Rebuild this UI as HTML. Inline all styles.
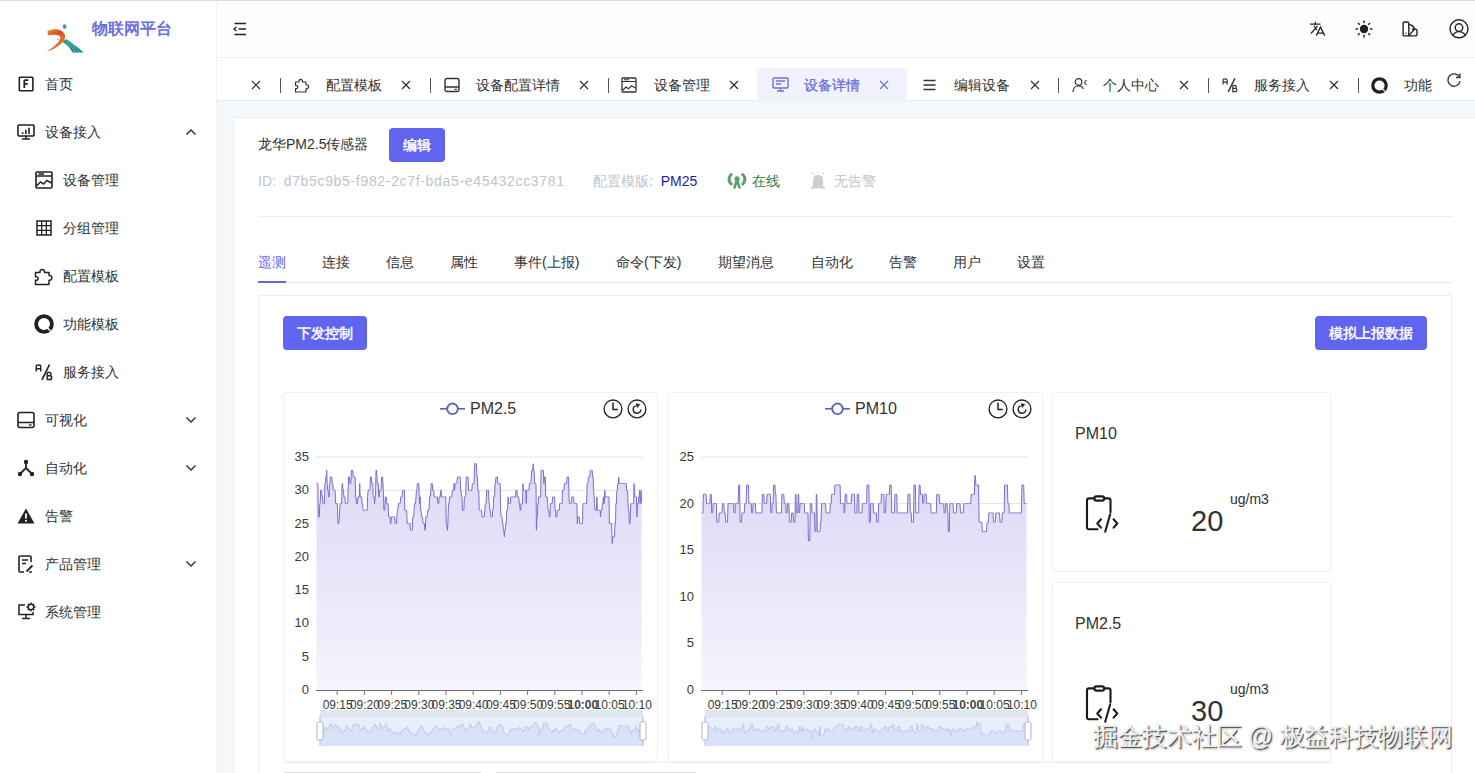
<!DOCTYPE html>
<html><head><meta charset="utf-8">
<style>
*{box-sizing:border-box;margin:0;padding:0}
html,body{width:1475px;height:773px;overflow:hidden}
body{position:relative;background:#f5f8fb;font-family:"Liberation Sans",sans-serif;color:#303133;font-size:14px}
.a{position:absolute;white-space:nowrap}
svg{position:absolute;overflow:visible}
.side{left:0;top:0;width:217px;height:773px;background:#fff;border-right:1px solid #f2f2f2}
.mi{left:45px;font-size:14px;color:#303133;line-height:20px}
.si{left:63px;font-size:14px;color:#303133;line-height:20px}
.hdr{left:217px;top:0;width:1258px;height:58px;background:#fdfdfd;border-bottom:1px solid #efefef}
.tabs{left:217px;top:58px;width:1258px;height:43px;background:#fff;border-bottom:1px solid #e9edf2}
.tt{font-size:14px;color:#303133;line-height:20px;top:75px}
.dv{width:1px;height:15px;background:#555;top:78px}
.card{left:233px;top:117px;width:1260px;height:700px;background:#fff;border:1px solid #eef0f3}
.btn{background:#6065f0;color:#fff;font-weight:normal;-webkit-text-stroke:0.45px #fff;font-size:14px;border-radius:4px;text-align:center}
.dt{font-size:14px;line-height:20px;top:252px;color:#303133}
.panel{left:258px;top:295px;width:1194px;height:500px;border:1px solid #ebeef5;border-radius:2px}
.cc{border:1px solid #eef0f3;border-radius:3px;background:#fff}
.yl{font-size:13px;color:#3a3a3a;text-align:right;width:30px;line-height:14px}
.xl{font-size:12px;color:#3a3a3a;line-height:14px}
</style></head><body>
<div class="a" style="left:0;top:0;width:1475px;height:1.4px;background:#dcdcdc;z-index:5"></div>

<!-- SIDEBAR -->
<div class="a side">
  <svg style="left:44px;top:22px" width="42" height="34" viewBox="0 0 42 34">
    <defs><linearGradient id="lg" x1="0" y1="0" x2="0.6" y2="1"><stop offset="0" stop-color="#e0a535"/><stop offset="0.4" stop-color="#e0482a"/><stop offset="1" stop-color="#e09030"/></linearGradient></defs>
    <ellipse cx="20.6" cy="4.6" rx="1.8" ry="2.3" fill="#3a9ac0"/>
    <path d="M3.5,8.8 C9,6.5 18,6.2 20.8,12.5 C23,18.5 15,25.5 2.7,29.8 C10,24.5 16,20 16.3,15.5 C16.5,12.3 11,12 3.8,13.5 Z" fill="url(#lg)"/>
    <path d="M12.5,16.5 L15,17 L13.8,18.6Z" fill="#4aa8d8"/>
    <path d="M19.3,18.8 L22.5,17.3 C28,21 34,25.5 39.8,30.6 L28.5,30.6 C26,26 23,22.5 19.3,20.8 Z" fill="#1e8e8a"/>
    <path d="M21.5,18.3 C27,22 32,26 36,30.6 M20.5,19.8 C25.5,23 29.5,26.5 32,30.6" stroke="#6cc8bc" stroke-width="0.7" fill="none"/>
  </svg>
  <div class="a" style="left:92px;top:19px;font-size:16px;font-weight:bold;color:#6b6fe0;line-height:20px">物联网平台</div>

  <!-- 首页 -->
  <svg style="left:18px;top:76px" width="16" height="16" viewBox="0 0 16 16"><rect x="1.3" y="1.2" width="13.6" height="13.6" rx="0.9" fill="none" stroke="#222" stroke-width="1.6"/><path d="M6.3,4.2 V12 M6.3,4.2 H10.3 M6.3,7.8 H9.8" stroke="#222" stroke-width="1.8" fill="none"/></svg>
  <div class="a mi" style="top:74px">首页</div>
  <!-- 设备接入 -->
  <svg style="left:17px;top:124px" width="18" height="16" viewBox="0 0 18 16"><rect x="1" y="1" width="16" height="11" rx="1" fill="none" stroke="#222" stroke-width="1.6"/><path d="M9,12 V14.6 M5,15 H13 M5.6,10 V8.3 M8.8,10 V5.8 M12,10 V3.8" stroke="#222" stroke-width="1.6" fill="none"/></svg>
  <div class="a mi" style="top:122px">设备接入</div>
  <svg style="left:185px;top:128px" width="12" height="8" viewBox="0 0 12 8"><path d="M1.5,6.5 L6,2 L10.5,6.5" stroke="#333" stroke-width="1.5" fill="none"/></svg>
  <!-- 设备管理 -->
  <svg style="left:35px;top:171px" width="18" height="18" viewBox="0 0 18 18"><rect x="1" y="1" width="16" height="16" rx="1" fill="none" stroke="#222" stroke-width="1.6"/><path d="M1,5 H17 M3.5,3 H9" stroke="#222" stroke-width="1.3" fill="none"/><path d="M1.5,15 L5.5,11 L8.5,13 L12,9.5 L16.5,12" stroke="#222" stroke-width="1.5" fill="none"/></svg>
  <div class="a si" style="top:170px">设备管理</div>
  <!-- 分组管理 -->
  <svg style="left:36px;top:220px" width="16" height="16" viewBox="0 0 16 16"><rect x="1" y="1" width="14" height="14" fill="none" stroke="#222" stroke-width="1.5"/><path d="M1,5.7 H15 M1,10.3 H15 M5.7,1 V15 M10.3,1 V15" stroke="#222" stroke-width="1.3" fill="none"/></svg>
  <div class="a si" style="top:218px">分组管理</div>
  <!-- 配置模板 -->
  <svg style="left:34px;top:267px" width="19" height="19" viewBox="0 0 19 19"><path d="M1.5,5.5 H6 C5,1.5 11.5,1.5 10.5,5.5 H15 V8.5 C18.8,7.8 18.8,14 15,13.3 V17.5 H1.5 V13.2 C5,13.8 5,9 1.5,9.8 Z" fill="none" stroke="#222" stroke-width="1.5" stroke-linejoin="round"/></svg>
  <div class="a si" style="top:266px">配置模板</div>
  <!-- 功能模板 -->
  <svg style="left:34px;top:314px" width="20" height="20" viewBox="0 0 20 20"><circle cx="10" cy="10" r="7.9" fill="none" stroke="#222" stroke-width="3.8"/><path d="M13,13.5 L16.5,17" stroke="#fff" stroke-width="1.4"/></svg>
  <div class="a si" style="top:314px">功能模板</div>
  <!-- 服务接入 -->
  <svg style="left:35px;top:363px" width="18" height="18" viewBox="0 0 18 18"><path d="M1.2,8.5 V3.5 C1.2,1.5 5.8,1.5 5.8,3.5 V8.5 M1.2,5.8 H5.8" fill="none" stroke="#222" stroke-width="1.4"/><path d="M14.5,1.5 L7,16.8" stroke="#222" stroke-width="1.7"/><path d="M12.2,9.5 V16.5 H15 C17.3,16.5 17.3,12.8 15,12.8 H12.2 M12.2,9.5 H14.6 C16.6,9.5 16.6,12.8 14.6,12.8" fill="none" stroke="#222" stroke-width="1.4"/></svg>
  <div class="a si" style="top:362px">服务接入</div>
  <!-- 可视化 -->
  <svg style="left:17px;top:411px" width="18" height="18" viewBox="0 0 18 18"><rect x="1" y="1.5" width="16" height="15" rx="2" fill="none" stroke="#222" stroke-width="1.6"/><path d="M1,11.5 H17" stroke="#222" stroke-width="1.5"/><path d="M12,14 H14.5" stroke="#222" stroke-width="1.4"/></svg>
  <div class="a mi" style="top:410px">可视化</div>
  <svg style="left:185px;top:416px" width="12" height="8" viewBox="0 0 12 8"><path d="M1.5,1.5 L6,6 L10.5,1.5" stroke="#333" stroke-width="1.5" fill="none"/></svg>
  <!-- 自动化 -->
  <svg style="left:17px;top:459px" width="18" height="18" viewBox="0 0 18 18"><path d="M9,3 V9 L3,15 M9,9 L15,15" stroke="#222" stroke-width="1.8" fill="none"/><circle cx="9" cy="3" r="2.2" fill="#222"/><circle cx="3" cy="15" r="2.2" fill="#222"/><circle cx="15" cy="15" r="2.2" fill="#222"/></svg>
  <div class="a mi" style="top:458px">自动化</div>
  <svg style="left:185px;top:464px" width="12" height="8" viewBox="0 0 12 8"><path d="M1.5,1.5 L6,6 L10.5,1.5" stroke="#333" stroke-width="1.5" fill="none"/></svg>
  <!-- 告警 -->
  <svg style="left:17px;top:507px" width="18" height="18" viewBox="0 0 18 18"><path d="M9,1.5 L17.5,16.5 H0.5 Z" fill="#222"/><path d="M9,6.5 V11.5" stroke="#fff" stroke-width="1.8"/><circle cx="9" cy="13.8" r="1" fill="#fff"/></svg>
  <div class="a mi" style="top:506px">告警</div>
  <!-- 产品管理 -->
  <svg style="left:17px;top:555px" width="18" height="18" viewBox="0 0 18 18"><path d="M14,7 V2 C14,1.5 13.5,1 13,1 H3 C2.5,1 2,1.5 2,2 V16 C2,16.5 2.5,17 3,17 H7" fill="none" stroke="#222" stroke-width="1.6"/><path d="M5,5 H11 M5,8.5 H9" stroke="#222" stroke-width="1.5"/><path d="M9.5,16.5 L15.5,10.5" stroke="#222" stroke-width="1.8"/><path d="M12,17 H15" stroke="#222" stroke-width="1.4"/></svg>
  <div class="a mi" style="top:554px">产品管理</div>
  <svg style="left:185px;top:560px" width="12" height="8" viewBox="0 0 12 8"><path d="M1.5,1.5 L6,6 L10.5,1.5" stroke="#333" stroke-width="1.5" fill="none"/></svg>
  <!-- 系统管理 -->
  <svg style="left:17px;top:602px" width="20" height="18" viewBox="0 0 20 18"><path d="M8,3 H2 V12.5 H16 V10" fill="none" stroke="#222" stroke-width="1.5"/><path d="M9,12.5 V16 M5,16.5 H13" stroke="#222" stroke-width="1.5"/><circle cx="14" cy="5" r="2.8" fill="none" stroke="#222" stroke-width="1.5"/><path d="M14,0.5 V2 M14,8 V9.5 M9.5,5 H11 M17,5 H18.5 M10.8,1.8 L11.9,2.9 M16.1,7.1 L17.2,8.2 M10.8,8.2 L11.9,7.1 M16.1,2.9 L17.2,1.8" stroke="#222" stroke-width="1.3"/></svg>
  <div class="a mi" style="top:602px">系统管理</div>
</div>

<!-- HEADER -->
<div class="a hdr"></div>
<svg style="left:233px;top:22px" width="14" height="14" viewBox="0 0 14 14"><path d="M1.5,1.5 H13 M5.5,7 H13 M1.5,12.5 H13" stroke="#222" stroke-width="1.5"/><path d="M3.5,5 L1,7 L3.5,9" stroke="#222" stroke-width="1.4" fill="none"/></svg>
<!-- translate -->
<svg style="left:1310px;top:21px" width="17" height="16" viewBox="0 0 17 16"><path d="M0,3.1 H10.5 M5.4,0.8 V3 M4,5 L6.8,9.2 M7.6,4.8 L1,12.5" stroke="#222" stroke-width="1.2" fill="none"/><path d="M6.3,14.6 L10.5,6 L14.7,14.6 M7.9,12.2 H13" stroke="#222" stroke-width="1.3" fill="none"/></svg>
<!-- sun -->
<svg style="left:1355px;top:20px" width="18" height="18" viewBox="0 0 18 18"><circle cx="9" cy="9" r="4.2" fill="#222"/><path d="M9,0.5 V3 M9,15 V17.5 M0.5,9 H3 M15,9 H17.5 M3,3 L4.7,4.7 M13.3,13.3 L15,15 M3,15 L4.7,13.3 M13.3,4.7 L15,3" stroke="#222" stroke-width="1.5"/></svg>
<!-- palette -->
<svg style="left:1401px;top:20px" width="18" height="18" viewBox="0 0 18 18"><g fill="none" stroke="#222" stroke-width="1.4" stroke-linejoin="round"><path d="M2.1,3.5 C2.1,2.6 2.7,2 3.6,2 H6.3 C7.2,2 7.8,2.6 7.8,3.5 V15.9 H3.6 C2.7,15.9 2.1,15.3 2.1,14.4 Z"/><path d="M7.8,4.6 C10.5,4.6 13.2,6.5 13.5,9.2 L7.8,15.6"/><path d="M11,9.2 H14.5 C15.4,9.2 16,9.8 16,10.7 V14.4 C16,15.3 15.4,15.9 14.5,15.9 H7.8"/></g><circle cx="4.9" cy="13.2" r="0.7" fill="#222"/></svg>
<!-- user -->
<svg style="left:1449px;top:19px" width="20" height="20" viewBox="0 0 20 20"><g fill="none" stroke="#222" stroke-width="1.4"><circle cx="10" cy="9.8" r="9"/><circle cx="10" cy="8.6" r="3.8"/><path d="M3.6,16.3 C5.3,13.8 7.8,12.6 10,12.6 C12.2,12.6 14.7,13.8 16.4,16.3"/></g></svg>

<!-- TABS BAR -->
<div class="a tabs"></div>
<svg style="left:251px;top:80px" width="10" height="10" viewBox="0 0 10 10"><path d="M1,1 L9,9 M9,1 L1,9" stroke="#333" stroke-width="1.2"/></svg>
<div class="a dv" style="left:280px"></div>
<svg style="left:294px;top:77px" width="16" height="16" viewBox="0 0 16 16"><path d="M1.5,5 H5 C4.2,1.5 9.2,1.5 8.5,5 H12 V7.8 C15.5,7.2 15.5,12.3 12,11.8 V15 H1.5 V11.5 C4.5,12 4.5,8 1.5,8.5 Z" fill="none" stroke="#333" stroke-width="1.2" stroke-linejoin="round"/></svg>
<div class="a tt" style="left:326px">配置模板</div>
<svg style="left:401px;top:80px" width="10" height="10" viewBox="0 0 10 10"><path d="M1,1 L9,9 M9,1 L1,9" stroke="#333" stroke-width="1.2"/></svg>
<div class="a dv" style="left:430px"></div>
<svg style="left:444px;top:77px" width="16" height="16" viewBox="0 0 16 16"><rect x="1" y="1.5" width="14" height="13" rx="2" fill="none" stroke="#333" stroke-width="1.4"/><path d="M1,10 H15 M10.5,12.3 H12.8" stroke="#333" stroke-width="1.3"/></svg>
<div class="a tt" style="left:476px">设备配置详情</div>
<svg style="left:579px;top:80px" width="10" height="10" viewBox="0 0 10 10"><path d="M1,1 L9,9 M9,1 L1,9" stroke="#333" stroke-width="1.2"/></svg>
<div class="a dv" style="left:608px"></div>
<svg style="left:621px;top:77px" width="16" height="16" viewBox="0 0 16 16"><rect x="1" y="1" width="14" height="14" rx="1" fill="none" stroke="#333" stroke-width="1.3"/><path d="M1,4.5 H15 M3,2.8 H8" stroke="#333" stroke-width="1.1" fill="none"/><path d="M1.5,13.5 L5,10 L7.5,11.8 L10.5,8.8 L14.5,11" stroke="#333" stroke-width="1.2" fill="none"/></svg>
<div class="a tt" style="left:654px">设备管理</div>
<svg style="left:729px;top:80px" width="10" height="10" viewBox="0 0 10 10"><path d="M1,1 L9,9 M9,1 L1,9" stroke="#333" stroke-width="1.2"/></svg>
<div class="a" style="left:757px;top:68px;width:150px;height:33px;background:#f0f1fc;border-radius:6px 6px 0 0"></div>
<svg style="left:772px;top:77px" width="17" height="15" viewBox="0 0 17 15"><rect x="1" y="1" width="15" height="10" rx="1" fill="none" stroke="#6d70d6" stroke-width="1.4"/><path d="M8.5,11 V13.5 M5,14 H12 M4,4 H13 M4,7 H9" stroke="#6d70d6" stroke-width="1.3"/></svg>
<div class="a tt" style="left:804px;color:#6d70d6;-webkit-text-stroke:0.3px #6d70d6">设备详情</div>
<svg style="left:879px;top:80px" width="10" height="10" viewBox="0 0 10 10"><path d="M1,1 L9,9 M9,1 L1,9" stroke="#6d70d6" stroke-width="1.2"/></svg>
<svg style="left:923px;top:79px" width="13" height="12" viewBox="0 0 13 12"><path d="M0.5,1.5 H12.5 M0.5,6 H12.5 M0.5,10.5 H12.5" stroke="#333" stroke-width="1.4"/></svg>
<div class="a tt" style="left:954px">编辑设备</div>
<svg style="left:1030px;top:80px" width="10" height="10" viewBox="0 0 10 10"><path d="M1,1 L9,9 M9,1 L1,9" stroke="#333" stroke-width="1.2"/></svg>
<div class="a dv" style="left:1058px"></div>
<svg style="left:1072px;top:77px" width="16" height="16" viewBox="0 0 16 16"><circle cx="6.5" cy="5" r="3.3" fill="none" stroke="#333" stroke-width="1.2"/><path d="M1,15 C1,10.5 3.5,9 6.5,9 C9.5,9 11,10.5 11.5,12" fill="none" stroke="#333" stroke-width="1.2"/><path d="M14.5,3 L12.5,5.5 L14.5,8" fill="none" stroke="#333" stroke-width="1.1"/></svg>
<div class="a tt" style="left:1103px">个人中心</div>
<svg style="left:1179px;top:80px" width="10" height="10" viewBox="0 0 10 10"><path d="M1,1 L9,9 M9,1 L1,9" stroke="#333" stroke-width="1.2"/></svg>
<div class="a dv" style="left:1208px"></div>
<svg style="left:1222px;top:77px" width="16" height="16" viewBox="0 0 18 18"><path d="M1.2,8.5 V3.5 C1.2,1.5 5.8,1.5 5.8,3.5 V8.5 M1.2,5.8 H5.8" fill="none" stroke="#333" stroke-width="1.4"/><path d="M14.5,1.5 L7,16.8" stroke="#333" stroke-width="1.6"/><path d="M12.2,9.5 V16.5 H15 C17.3,16.5 17.3,12.8 15,12.8 H12.2 M12.2,9.5 H14.6 C16.6,9.5 16.6,12.8 14.6,12.8" fill="none" stroke="#333" stroke-width="1.4"/></svg>
<div class="a tt" style="left:1254px">服务接入</div>
<svg style="left:1329px;top:80px" width="10" height="10" viewBox="0 0 10 10"><path d="M1,1 L9,9 M9,1 L1,9" stroke="#333" stroke-width="1.2"/></svg>
<div class="a dv" style="left:1358px"></div>
<svg style="left:1371px;top:77px" width="17" height="17" viewBox="0 0 20 20"><circle cx="10" cy="10" r="7.9" fill="none" stroke="#222" stroke-width="3.8"/><path d="M13,13.5 L16.5,17" stroke="#fff" stroke-width="1.4"/></svg>
<div class="a tt" style="left:1404px">功能</div>
<svg style="left:1446px;top:72px" width="16" height="16" viewBox="0 0 16 16"><path d="M13.5,5 A6.2,6.2 0 1,0 14.2,9" fill="none" stroke="#333" stroke-width="1.3"/><path d="M14,1.5 V5.5 H10" fill="none" stroke="#333" stroke-width="1.3"/></svg>

<!-- CONTENT CARD -->
<div class="a card"></div>
<div class="a" style="left:258px;top:134px;font-size:14px;line-height:20px;color:#303133">龙华PM2.5传感器</div>
<div class="a btn" style="left:389px;top:128px;width:56px;height:34px;line-height:34px">编辑</div>
<div class="a" style="left:258px;top:171px;font-size:14px;line-height:20px;color:#c0c4cc">ID:&nbsp; <span style="letter-spacing:0.67px">d7b5c9b5-f982-2c7f-bda5-e45432cc3781</span></div>
<div class="a" style="left:593px;top:171px;font-size:14px;line-height:20px;color:#c0c4cc">配置模版:&nbsp; <span style="color:#1c1ca8">PM25</span></div>
<svg style="left:727px;top:172px" width="20" height="17" viewBox="0 0 20 17"><g fill="#5a9e6b"><path d="M4.2,0.8 C-0.6,4.2 -0.6,10.5 4.2,13.8 L6.2,12 C2.8,9.5 2.8,5 6.2,2.6 Z"/><path d="M15.8,0.8 C20.6,4.2 20.6,10.5 15.8,13.8 L13.8,12 C17.2,9.5 17.2,5 13.8,2.6 Z"/><circle cx="10" cy="6.8" r="2.6"/><path d="M8.3,8.5 L6,16.5 H8.6 L10,12 L11.4,16.5 H14 L11.7,8.5 Z"/></g></svg>
<div class="a" style="left:752px;top:171px;font-size:14px;line-height:20px;color:#2e8043">在线</div>
<svg style="left:810px;top:171px" width="16" height="18" viewBox="0 0 16 18"><path d="M3,16 V9 C3,5 5,4 8,4 C11,4 13,5 13,9 V16 Z" fill="#cfcfcf"/><rect x="1" y="15.5" width="14" height="2" fill="#cfcfcf"/><path d="M8,0.5 V2.5 M2,2 L3.5,3.5 M14,2 L12.5,3.5" stroke="#cfcfcf" stroke-width="1.2"/></svg>
<div class="a" style="left:834px;top:171px;font-size:14px;line-height:20px;color:#c0c4cc">无告警</div>
<div class="a" style="left:258px;top:216px;width:1194px;height:1px;background:#ebeef5"></div>

<!-- detail tabs -->
<div class="a dt" style="left:258px;color:#6366f1">遥测</div>
<div class="a dt" style="left:322px">连接</div>
<div class="a dt" style="left:386px">信息</div>
<div class="a dt" style="left:450px">属性</div>
<div class="a dt" style="left:514px">事件(上报)</div>
<div class="a dt" style="left:616px">命令(下发)</div>
<div class="a dt" style="left:718px">期望消息</div>
<div class="a dt" style="left:811px">自动化</div>
<div class="a dt" style="left:889px">告警</div>
<div class="a dt" style="left:953px">用户</div>
<div class="a dt" style="left:1017px">设置</div>
<div class="a" style="left:258px;top:282px;width:1194px;height:1px;background:#e4e7ed"></div>
<div class="a" style="left:258px;top:281px;width:28px;height:2px;background:#6366f1"></div>

<!-- panel -->
<div class="a panel"></div>
<div class="a btn" style="left:283px;top:316px;width:84px;height:34px;line-height:34px">下发控制</div>
<div class="a btn" style="left:1315px;top:316px;width:112px;height:34px;line-height:34px">模拟上报数据</div>

<!-- chart cards -->
<div class="a cc" style="left:283px;top:392px;width:375px;height:370px"></div>
<div class="a cc" style="left:668px;top:392px;width:375px;height:370px"></div>
<div class="a cc" style="left:1052px;top:392px;width:279px;height:180px"></div>
<div class="a cc" style="left:1052px;top:582px;width:279px;height:180px"></div>
<div class="a" style="left:283px;top:762px;width:1050px;height:1px;background:#f0f0f0"></div><div class="a" style="left:284px;top:771.5px;width:197px;height:1.5px;background:#dcdcdc"></div>
<div class="a" style="left:496px;top:771.5px;width:200px;height:1.5px;background:#dcdcdc"></div>

<svg style="left:0;top:0" width="1475" height="773" viewBox="0 0 1475 773">
<defs><linearGradient id="g1" x1="0" y1="0" x2="0" y2="1"><stop offset="0" stop-color="#ddd8f6"/><stop offset="1" stop-color="#f6f4fd"/></linearGradient></defs>
<path d="M316,457.0 H643" stroke="#e3e5ea" stroke-width="1"/>
<path d="M316,490.3 H643" stroke="#e3e5ea" stroke-width="1"/>
<path d="M316,523.6 H643" stroke="#e3e5ea" stroke-width="1"/>
<path d="M316,556.9 H643" stroke="#e3e5ea" stroke-width="1"/>
<path d="M316,590.1 H643" stroke="#e3e5ea" stroke-width="1"/>
<path d="M316,623.4 H643" stroke="#e3e5ea" stroke-width="1"/>
<path d="M316,656.7 H643" stroke="#e3e5ea" stroke-width="1"/>
<path d="M316.5,483.6 L317.0,483.6 L317.4,483.6 L317.9,483.6 L318.4,516.9 L318.8,516.9 L319.3,516.9 L319.8,503.6 L320.2,503.6 L320.7,490.3 L321.1,490.3 L321.6,490.3 L322.1,496.9 L322.5,496.9 L323.0,503.6 L323.5,503.6 L323.9,503.6 L324.4,503.6 L324.9,483.6 L325.3,483.6 L325.8,477.0 L326.3,477.0 L326.7,470.3 L327.2,483.6 L327.7,490.3 L328.1,490.3 L328.6,496.9 L329.1,496.9 L329.5,483.6 L330.0,483.6 L330.4,477.0 L330.9,477.0 L331.4,477.0 L331.8,477.0 L332.3,483.6 L332.8,483.6 L333.2,490.3 L333.7,490.3 L334.2,490.3 L334.6,490.3 L335.1,490.3 L335.6,503.6 L336.0,503.6 L336.5,503.6 L337.0,503.6 L337.4,503.6 L337.9,523.6 L338.4,523.6 L338.8,523.6 L339.3,516.9 L339.7,510.3 L340.2,503.6 L340.7,503.6 L341.1,503.6 L341.6,503.6 L342.1,483.6 L342.5,483.6 L343.0,490.3 L343.5,490.3 L343.9,496.9 L344.4,496.9 L344.9,496.9 L345.3,503.6 L345.8,503.6 L346.3,503.6 L346.7,503.6 L347.2,503.6 L347.7,503.6 L348.1,490.3 L348.6,477.0 L349.0,477.0 L349.5,477.0 L350.0,483.6 L350.4,483.6 L350.9,483.6 L351.4,470.3 L351.8,470.3 L352.3,470.3 L352.8,470.3 L353.2,477.0 L353.7,477.0 L354.2,477.0 L354.6,477.0 L355.1,477.0 L355.6,496.9 L356.0,496.9 L356.5,503.6 L357.0,503.6 L357.4,503.6 L357.9,496.9 L358.3,496.9 L358.8,496.9 L359.3,496.9 L359.7,483.6 L360.2,496.9 L360.7,496.9 L361.1,496.9 L361.6,496.9 L362.1,503.6 L362.5,503.6 L363.0,510.3 L363.5,510.3 L363.9,510.3 L364.4,510.3 L364.9,510.3 L365.3,510.3 L365.8,510.3 L366.2,510.3 L366.7,510.3 L367.2,510.3 L367.6,496.9 L368.1,490.3 L368.6,490.3 L369.0,490.3 L369.5,490.3 L370.0,490.3 L370.4,477.0 L370.9,477.0 L371.4,477.0 L371.8,483.6 L372.3,483.6 L372.8,483.6 L373.2,496.9 L373.7,496.9 L374.2,496.9 L374.6,503.6 L375.1,496.9 L375.5,496.9 L376.0,470.3 L376.5,470.3 L376.9,477.0 L377.4,483.6 L377.9,483.6 L378.3,483.6 L378.8,496.9 L379.3,496.9 L379.7,490.3 L380.2,490.3 L380.7,490.3 L381.1,490.3 L381.6,477.0 L382.1,477.0 L382.5,477.0 L383.0,483.6 L383.5,496.9 L383.9,510.3 L384.4,510.3 L384.8,510.3 L385.3,496.9 L385.8,496.9 L386.2,496.9 L386.7,503.6 L387.2,503.6 L387.6,503.6 L388.1,503.6 L388.6,516.9 L389.0,516.9 L389.5,516.9 L390.0,516.9 L390.4,523.6 L390.9,523.6 L391.4,516.9 L391.8,516.9 L392.3,516.9 L392.8,516.9 L393.2,516.9 L393.7,516.9 L394.1,516.9 L394.6,516.9 L395.1,523.6 L395.5,523.6 L396.0,523.6 L396.5,523.6 L396.9,516.9 L397.4,510.3 L397.9,510.3 L398.3,503.6 L398.8,503.6 L399.3,503.6 L399.7,503.6 L400.2,503.6 L400.7,496.9 L401.1,496.9 L401.6,496.9 L402.1,496.9 L402.5,490.3 L403.0,490.3 L403.4,490.3 L403.9,490.3 L404.4,490.3 L404.8,510.3 L405.3,510.3 L405.8,510.3 L406.2,510.3 L406.7,510.3 L407.2,523.6 L407.6,523.6 L408.1,523.6 L408.6,523.6 L409.0,523.6 L409.5,523.6 L410.0,523.6 L410.4,530.2 L410.9,530.2 L411.3,530.2 L411.8,530.2 L412.3,530.2 L412.7,516.9 L413.2,516.9 L413.7,516.9 L414.1,510.3 L414.6,503.6 L415.1,503.6 L415.5,503.6 L416.0,496.9 L416.5,490.3 L416.9,490.3 L417.4,483.6 L417.9,483.6 L418.3,483.6 L418.8,483.6 L419.3,496.9 L419.7,503.6 L420.2,496.9 L420.6,510.3 L421.1,510.3 L421.6,516.9 L422.0,516.9 L422.5,516.9 L423.0,523.6 L423.4,523.6 L423.9,523.6 L424.4,523.6 L424.8,530.2 L425.3,530.2 L425.8,516.9 L426.2,516.9 L426.7,516.9 L427.2,516.9 L427.6,510.3 L428.1,510.3 L428.6,510.3 L429.0,510.3 L429.5,496.9 L429.9,496.9 L430.4,496.9 L430.9,490.3 L431.3,483.6 L431.8,483.6 L432.3,483.6 L432.7,490.3 L433.2,490.3 L433.7,490.3 L434.1,496.9 L434.6,496.9 L435.1,496.9 L435.5,496.9 L436.0,496.9 L436.5,496.9 L436.9,496.9 L437.4,496.9 L437.9,503.6 L438.3,503.6 L438.8,503.6 L439.2,496.9 L439.7,496.9 L440.2,496.9 L440.6,490.3 L441.1,490.3 L441.6,496.9 L442.0,496.9 L442.5,496.9 L443.0,496.9 L443.4,496.9 L443.9,496.9 L444.4,496.9 L444.8,496.9 L445.3,496.9 L445.8,496.9 L446.2,523.6 L446.7,523.6 L447.2,530.2 L447.6,530.2 L448.1,516.9 L448.5,503.6 L449.0,503.6 L449.5,496.9 L449.9,496.9 L450.4,496.9 L450.9,496.9 L451.3,496.9 L451.8,496.9 L452.3,490.3 L452.7,490.3 L453.2,490.3 L453.7,490.3 L454.1,483.6 L454.6,490.3 L455.1,483.6 L455.5,483.6 L456.0,483.6 L456.4,483.6 L456.9,483.6 L457.4,477.0 L457.8,477.0 L458.3,477.0 L458.8,477.0 L459.2,477.0 L459.7,477.0 L460.2,477.0 L460.6,490.3 L461.1,490.3 L461.6,496.9 L462.0,496.9 L462.5,510.3 L463.0,510.3 L463.4,510.3 L463.9,510.3 L464.4,496.9 L464.8,496.9 L465.3,496.9 L465.7,496.9 L466.2,477.0 L466.7,477.0 L467.1,477.0 L467.6,477.0 L468.1,477.0 L468.5,490.3 L469.0,490.3 L469.5,490.3 L469.9,490.3 L470.4,490.3 L470.9,490.3 L471.3,490.3 L471.8,490.3 L472.3,483.6 L472.7,483.6 L473.2,483.6 L473.7,483.6 L474.1,483.6 L474.6,463.7 L475.0,463.7 L475.5,463.7 L476.0,463.7 L476.4,463.7 L476.9,477.0 L477.4,477.0 L477.8,490.3 L478.3,490.3 L478.8,490.3 L479.2,510.3 L479.7,510.3 L480.2,510.3 L480.6,510.3 L481.1,510.3 L481.6,510.3 L482.0,516.9 L482.5,516.9 L483.0,516.9 L483.4,516.9 L483.9,516.9 L484.3,516.9 L484.8,510.3 L485.3,503.6 L485.7,503.6 L486.2,503.6 L486.7,490.3 L487.1,490.3 L487.6,490.3 L488.1,490.3 L488.5,490.3 L489.0,503.6 L489.5,503.6 L489.9,510.3 L490.4,510.3 L490.9,516.9 L491.3,516.9 L491.8,516.9 L492.3,516.9 L492.7,510.3 L493.2,510.3 L493.6,496.9 L494.1,496.9 L494.6,496.9 L495.0,483.6 L495.5,483.6 L496.0,477.0 L496.4,477.0 L496.9,477.0 L497.4,477.0 L497.8,483.6 L498.3,483.6 L498.8,483.6 L499.2,483.6 L499.7,483.6 L500.2,483.6 L500.6,510.3 L501.1,516.9 L501.6,516.9 L502.0,516.9 L502.5,523.6 L502.9,523.6 L503.4,530.2 L503.9,530.2 L504.3,536.9 L504.8,530.2 L505.3,530.2 L505.7,523.6 L506.2,523.6 L506.7,510.3 L507.1,510.3 L507.6,510.3 L508.1,496.9 L508.5,503.6 L509.0,503.6 L509.5,503.6 L509.9,503.6 L510.4,503.6 L510.8,496.9 L511.3,496.9 L511.8,496.9 L512.2,496.9 L512.7,496.9 L513.2,496.9 L513.6,496.9 L514.1,496.9 L514.6,496.9 L515.0,496.9 L515.5,496.9 L516.0,490.3 L516.4,490.3 L516.9,490.3 L517.4,496.9 L517.8,496.9 L518.3,496.9 L518.8,496.9 L519.2,503.6 L519.7,503.6 L520.1,510.3 L520.6,510.3 L521.1,503.6 L521.5,503.6 L522.0,503.6 L522.5,503.6 L522.9,483.6 L523.4,490.3 L523.9,490.3 L524.3,490.3 L524.8,490.3 L525.3,490.3 L525.7,490.3 L526.2,503.6 L526.7,490.3 L527.1,490.3 L527.6,490.3 L528.1,490.3 L528.5,490.3 L529.0,490.3 L529.4,483.6 L529.9,483.6 L530.4,483.6 L530.8,483.6 L531.3,477.0 L531.8,470.3 L532.2,470.3 L532.7,470.3 L533.2,463.7 L533.6,470.3 L534.1,470.3 L534.6,483.6 L535.0,483.6 L535.5,483.6 L536.0,483.6 L536.4,530.2 L536.9,516.9 L537.4,516.9 L537.8,503.6 L538.3,503.6 L538.7,496.9 L539.2,496.9 L539.7,496.9 L540.1,496.9 L540.6,496.9 L541.1,470.3 L541.5,470.3 L542.0,470.3 L542.5,470.3 L542.9,470.3 L543.4,470.3 L543.9,483.6 L544.3,477.0 L544.8,477.0 L545.3,477.0 L545.7,496.9 L546.2,496.9 L546.7,496.9 L547.1,496.9 L547.6,503.6 L548.0,510.3 L548.5,510.3 L549.0,510.3 L549.4,516.9 L549.9,516.9 L550.4,503.6 L550.8,503.6 L551.3,503.6 L551.8,503.6 L552.2,503.6 L552.7,496.9 L553.2,496.9 L553.6,496.9 L554.1,496.9 L554.6,496.9 L555.0,510.3 L555.5,510.3 L555.9,516.9 L556.4,516.9 L556.9,516.9 L557.3,510.3 L557.8,510.3 L558.3,510.3 L558.7,510.3 L559.2,510.3 L559.7,503.6 L560.1,503.6 L560.6,503.6 L561.1,503.6 L561.5,503.6 L562.0,503.6 L562.5,490.3 L562.9,490.3 L563.4,490.3 L563.9,490.3 L564.3,483.6 L564.8,483.6 L565.2,483.6 L565.7,483.6 L566.2,483.6 L566.6,483.6 L567.1,477.0 L567.6,477.0 L568.0,477.0 L568.5,477.0 L569.0,496.9 L569.4,503.6 L569.9,503.6 L570.4,503.6 L570.8,503.6 L571.3,503.6 L571.8,496.9 L572.2,496.9 L572.7,496.9 L573.2,496.9 L573.6,496.9 L574.1,503.6 L574.5,503.6 L575.0,503.6 L575.5,503.6 L575.9,503.6 L576.4,503.6 L576.9,503.6 L577.3,523.6 L577.8,516.9 L578.3,516.9 L578.7,516.9 L579.2,516.9 L579.7,523.6 L580.1,523.6 L580.6,523.6 L581.1,523.6 L581.5,523.6 L582.0,523.6 L582.5,523.6 L582.9,503.6 L583.4,503.6 L583.8,503.6 L584.3,503.6 L584.8,503.6 L585.2,503.6 L585.7,503.6 L586.2,503.6 L586.6,503.6 L587.1,483.6 L587.6,483.6 L588.0,483.6 L588.5,477.0 L589.0,477.0 L589.4,477.0 L589.9,477.0 L590.4,470.3 L590.8,470.3 L591.3,470.3 L591.8,470.3 L592.2,470.3 L592.7,477.0 L593.1,477.0 L593.6,490.3 L594.1,496.9 L594.5,503.6 L595.0,510.3 L595.5,510.3 L595.9,510.3 L596.4,510.3 L596.9,496.9 L597.3,510.3 L597.8,510.3 L598.3,510.3 L598.7,510.3 L599.2,510.3 L599.7,510.3 L600.1,510.3 L600.6,516.9 L601.0,510.3 L601.5,510.3 L602.0,510.3 L602.4,503.6 L602.9,503.6 L603.4,496.9 L603.8,503.6 L604.3,503.6 L604.8,490.3 L605.2,496.9 L605.7,496.9 L606.2,496.9 L606.6,496.9 L607.1,496.9 L607.6,496.9 L608.0,496.9 L608.5,496.9 L609.0,496.9 L609.4,523.6 L609.9,523.6 L610.3,523.6 L610.8,523.6 L611.3,523.6 L611.7,523.6 L612.2,543.5 L612.7,536.9 L613.1,536.9 L613.6,536.9 L614.1,536.9 L614.5,536.9 L615.0,523.6 L615.5,523.6 L615.9,503.6 L616.4,503.6 L616.9,490.3 L617.3,490.3 L617.8,483.6 L618.3,483.6 L618.7,477.0 L619.2,483.6 L619.6,483.6 L620.1,483.6 L620.6,483.6 L621.0,483.6 L621.5,483.6 L622.0,483.6 L622.4,483.6 L622.9,483.6 L623.4,483.6 L623.8,483.6 L624.3,483.6 L624.8,483.6 L625.2,483.6 L625.7,483.6 L626.2,483.6 L626.6,490.3 L627.1,490.3 L627.6,490.3 L628.0,503.6 L628.5,510.3 L628.9,510.3 L629.4,523.6 L629.9,523.6 L630.3,516.9 L630.8,503.6 L631.3,503.6 L631.7,503.6 L632.2,503.6 L632.7,503.6 L633.1,503.6 L633.6,503.6 L634.1,483.6 L634.5,490.3 L635.0,496.9 L635.5,496.9 L635.9,496.9 L636.4,496.9 L636.9,516.9 L637.3,503.6 L637.8,503.6 L638.2,503.6 L638.7,496.9 L639.2,496.9 L639.6,490.3 L640.1,503.6 L640.6,496.9 L641.0,490.3 L641.5,503.6 L641.5,690 L316.5,690 Z" fill="url(#g1)" stroke="none"/>
<path d="M316.5,483.6 L317.0,483.6 L317.4,483.6 L317.9,483.6 L318.4,516.9 L318.8,516.9 L319.3,516.9 L319.8,503.6 L320.2,503.6 L320.7,490.3 L321.1,490.3 L321.6,490.3 L322.1,496.9 L322.5,496.9 L323.0,503.6 L323.5,503.6 L323.9,503.6 L324.4,503.6 L324.9,483.6 L325.3,483.6 L325.8,477.0 L326.3,477.0 L326.7,470.3 L327.2,483.6 L327.7,490.3 L328.1,490.3 L328.6,496.9 L329.1,496.9 L329.5,483.6 L330.0,483.6 L330.4,477.0 L330.9,477.0 L331.4,477.0 L331.8,477.0 L332.3,483.6 L332.8,483.6 L333.2,490.3 L333.7,490.3 L334.2,490.3 L334.6,490.3 L335.1,490.3 L335.6,503.6 L336.0,503.6 L336.5,503.6 L337.0,503.6 L337.4,503.6 L337.9,523.6 L338.4,523.6 L338.8,523.6 L339.3,516.9 L339.7,510.3 L340.2,503.6 L340.7,503.6 L341.1,503.6 L341.6,503.6 L342.1,483.6 L342.5,483.6 L343.0,490.3 L343.5,490.3 L343.9,496.9 L344.4,496.9 L344.9,496.9 L345.3,503.6 L345.8,503.6 L346.3,503.6 L346.7,503.6 L347.2,503.6 L347.7,503.6 L348.1,490.3 L348.6,477.0 L349.0,477.0 L349.5,477.0 L350.0,483.6 L350.4,483.6 L350.9,483.6 L351.4,470.3 L351.8,470.3 L352.3,470.3 L352.8,470.3 L353.2,477.0 L353.7,477.0 L354.2,477.0 L354.6,477.0 L355.1,477.0 L355.6,496.9 L356.0,496.9 L356.5,503.6 L357.0,503.6 L357.4,503.6 L357.9,496.9 L358.3,496.9 L358.8,496.9 L359.3,496.9 L359.7,483.6 L360.2,496.9 L360.7,496.9 L361.1,496.9 L361.6,496.9 L362.1,503.6 L362.5,503.6 L363.0,510.3 L363.5,510.3 L363.9,510.3 L364.4,510.3 L364.9,510.3 L365.3,510.3 L365.8,510.3 L366.2,510.3 L366.7,510.3 L367.2,510.3 L367.6,496.9 L368.1,490.3 L368.6,490.3 L369.0,490.3 L369.5,490.3 L370.0,490.3 L370.4,477.0 L370.9,477.0 L371.4,477.0 L371.8,483.6 L372.3,483.6 L372.8,483.6 L373.2,496.9 L373.7,496.9 L374.2,496.9 L374.6,503.6 L375.1,496.9 L375.5,496.9 L376.0,470.3 L376.5,470.3 L376.9,477.0 L377.4,483.6 L377.9,483.6 L378.3,483.6 L378.8,496.9 L379.3,496.9 L379.7,490.3 L380.2,490.3 L380.7,490.3 L381.1,490.3 L381.6,477.0 L382.1,477.0 L382.5,477.0 L383.0,483.6 L383.5,496.9 L383.9,510.3 L384.4,510.3 L384.8,510.3 L385.3,496.9 L385.8,496.9 L386.2,496.9 L386.7,503.6 L387.2,503.6 L387.6,503.6 L388.1,503.6 L388.6,516.9 L389.0,516.9 L389.5,516.9 L390.0,516.9 L390.4,523.6 L390.9,523.6 L391.4,516.9 L391.8,516.9 L392.3,516.9 L392.8,516.9 L393.2,516.9 L393.7,516.9 L394.1,516.9 L394.6,516.9 L395.1,523.6 L395.5,523.6 L396.0,523.6 L396.5,523.6 L396.9,516.9 L397.4,510.3 L397.9,510.3 L398.3,503.6 L398.8,503.6 L399.3,503.6 L399.7,503.6 L400.2,503.6 L400.7,496.9 L401.1,496.9 L401.6,496.9 L402.1,496.9 L402.5,490.3 L403.0,490.3 L403.4,490.3 L403.9,490.3 L404.4,490.3 L404.8,510.3 L405.3,510.3 L405.8,510.3 L406.2,510.3 L406.7,510.3 L407.2,523.6 L407.6,523.6 L408.1,523.6 L408.6,523.6 L409.0,523.6 L409.5,523.6 L410.0,523.6 L410.4,530.2 L410.9,530.2 L411.3,530.2 L411.8,530.2 L412.3,530.2 L412.7,516.9 L413.2,516.9 L413.7,516.9 L414.1,510.3 L414.6,503.6 L415.1,503.6 L415.5,503.6 L416.0,496.9 L416.5,490.3 L416.9,490.3 L417.4,483.6 L417.9,483.6 L418.3,483.6 L418.8,483.6 L419.3,496.9 L419.7,503.6 L420.2,496.9 L420.6,510.3 L421.1,510.3 L421.6,516.9 L422.0,516.9 L422.5,516.9 L423.0,523.6 L423.4,523.6 L423.9,523.6 L424.4,523.6 L424.8,530.2 L425.3,530.2 L425.8,516.9 L426.2,516.9 L426.7,516.9 L427.2,516.9 L427.6,510.3 L428.1,510.3 L428.6,510.3 L429.0,510.3 L429.5,496.9 L429.9,496.9 L430.4,496.9 L430.9,490.3 L431.3,483.6 L431.8,483.6 L432.3,483.6 L432.7,490.3 L433.2,490.3 L433.7,490.3 L434.1,496.9 L434.6,496.9 L435.1,496.9 L435.5,496.9 L436.0,496.9 L436.5,496.9 L436.9,496.9 L437.4,496.9 L437.9,503.6 L438.3,503.6 L438.8,503.6 L439.2,496.9 L439.7,496.9 L440.2,496.9 L440.6,490.3 L441.1,490.3 L441.6,496.9 L442.0,496.9 L442.5,496.9 L443.0,496.9 L443.4,496.9 L443.9,496.9 L444.4,496.9 L444.8,496.9 L445.3,496.9 L445.8,496.9 L446.2,523.6 L446.7,523.6 L447.2,530.2 L447.6,530.2 L448.1,516.9 L448.5,503.6 L449.0,503.6 L449.5,496.9 L449.9,496.9 L450.4,496.9 L450.9,496.9 L451.3,496.9 L451.8,496.9 L452.3,490.3 L452.7,490.3 L453.2,490.3 L453.7,490.3 L454.1,483.6 L454.6,490.3 L455.1,483.6 L455.5,483.6 L456.0,483.6 L456.4,483.6 L456.9,483.6 L457.4,477.0 L457.8,477.0 L458.3,477.0 L458.8,477.0 L459.2,477.0 L459.7,477.0 L460.2,477.0 L460.6,490.3 L461.1,490.3 L461.6,496.9 L462.0,496.9 L462.5,510.3 L463.0,510.3 L463.4,510.3 L463.9,510.3 L464.4,496.9 L464.8,496.9 L465.3,496.9 L465.7,496.9 L466.2,477.0 L466.7,477.0 L467.1,477.0 L467.6,477.0 L468.1,477.0 L468.5,490.3 L469.0,490.3 L469.5,490.3 L469.9,490.3 L470.4,490.3 L470.9,490.3 L471.3,490.3 L471.8,490.3 L472.3,483.6 L472.7,483.6 L473.2,483.6 L473.7,483.6 L474.1,483.6 L474.6,463.7 L475.0,463.7 L475.5,463.7 L476.0,463.7 L476.4,463.7 L476.9,477.0 L477.4,477.0 L477.8,490.3 L478.3,490.3 L478.8,490.3 L479.2,510.3 L479.7,510.3 L480.2,510.3 L480.6,510.3 L481.1,510.3 L481.6,510.3 L482.0,516.9 L482.5,516.9 L483.0,516.9 L483.4,516.9 L483.9,516.9 L484.3,516.9 L484.8,510.3 L485.3,503.6 L485.7,503.6 L486.2,503.6 L486.7,490.3 L487.1,490.3 L487.6,490.3 L488.1,490.3 L488.5,490.3 L489.0,503.6 L489.5,503.6 L489.9,510.3 L490.4,510.3 L490.9,516.9 L491.3,516.9 L491.8,516.9 L492.3,516.9 L492.7,510.3 L493.2,510.3 L493.6,496.9 L494.1,496.9 L494.6,496.9 L495.0,483.6 L495.5,483.6 L496.0,477.0 L496.4,477.0 L496.9,477.0 L497.4,477.0 L497.8,483.6 L498.3,483.6 L498.8,483.6 L499.2,483.6 L499.7,483.6 L500.2,483.6 L500.6,510.3 L501.1,516.9 L501.6,516.9 L502.0,516.9 L502.5,523.6 L502.9,523.6 L503.4,530.2 L503.9,530.2 L504.3,536.9 L504.8,530.2 L505.3,530.2 L505.7,523.6 L506.2,523.6 L506.7,510.3 L507.1,510.3 L507.6,510.3 L508.1,496.9 L508.5,503.6 L509.0,503.6 L509.5,503.6 L509.9,503.6 L510.4,503.6 L510.8,496.9 L511.3,496.9 L511.8,496.9 L512.2,496.9 L512.7,496.9 L513.2,496.9 L513.6,496.9 L514.1,496.9 L514.6,496.9 L515.0,496.9 L515.5,496.9 L516.0,490.3 L516.4,490.3 L516.9,490.3 L517.4,496.9 L517.8,496.9 L518.3,496.9 L518.8,496.9 L519.2,503.6 L519.7,503.6 L520.1,510.3 L520.6,510.3 L521.1,503.6 L521.5,503.6 L522.0,503.6 L522.5,503.6 L522.9,483.6 L523.4,490.3 L523.9,490.3 L524.3,490.3 L524.8,490.3 L525.3,490.3 L525.7,490.3 L526.2,503.6 L526.7,490.3 L527.1,490.3 L527.6,490.3 L528.1,490.3 L528.5,490.3 L529.0,490.3 L529.4,483.6 L529.9,483.6 L530.4,483.6 L530.8,483.6 L531.3,477.0 L531.8,470.3 L532.2,470.3 L532.7,470.3 L533.2,463.7 L533.6,470.3 L534.1,470.3 L534.6,483.6 L535.0,483.6 L535.5,483.6 L536.0,483.6 L536.4,530.2 L536.9,516.9 L537.4,516.9 L537.8,503.6 L538.3,503.6 L538.7,496.9 L539.2,496.9 L539.7,496.9 L540.1,496.9 L540.6,496.9 L541.1,470.3 L541.5,470.3 L542.0,470.3 L542.5,470.3 L542.9,470.3 L543.4,470.3 L543.9,483.6 L544.3,477.0 L544.8,477.0 L545.3,477.0 L545.7,496.9 L546.2,496.9 L546.7,496.9 L547.1,496.9 L547.6,503.6 L548.0,510.3 L548.5,510.3 L549.0,510.3 L549.4,516.9 L549.9,516.9 L550.4,503.6 L550.8,503.6 L551.3,503.6 L551.8,503.6 L552.2,503.6 L552.7,496.9 L553.2,496.9 L553.6,496.9 L554.1,496.9 L554.6,496.9 L555.0,510.3 L555.5,510.3 L555.9,516.9 L556.4,516.9 L556.9,516.9 L557.3,510.3 L557.8,510.3 L558.3,510.3 L558.7,510.3 L559.2,510.3 L559.7,503.6 L560.1,503.6 L560.6,503.6 L561.1,503.6 L561.5,503.6 L562.0,503.6 L562.5,490.3 L562.9,490.3 L563.4,490.3 L563.9,490.3 L564.3,483.6 L564.8,483.6 L565.2,483.6 L565.7,483.6 L566.2,483.6 L566.6,483.6 L567.1,477.0 L567.6,477.0 L568.0,477.0 L568.5,477.0 L569.0,496.9 L569.4,503.6 L569.9,503.6 L570.4,503.6 L570.8,503.6 L571.3,503.6 L571.8,496.9 L572.2,496.9 L572.7,496.9 L573.2,496.9 L573.6,496.9 L574.1,503.6 L574.5,503.6 L575.0,503.6 L575.5,503.6 L575.9,503.6 L576.4,503.6 L576.9,503.6 L577.3,523.6 L577.8,516.9 L578.3,516.9 L578.7,516.9 L579.2,516.9 L579.7,523.6 L580.1,523.6 L580.6,523.6 L581.1,523.6 L581.5,523.6 L582.0,523.6 L582.5,523.6 L582.9,503.6 L583.4,503.6 L583.8,503.6 L584.3,503.6 L584.8,503.6 L585.2,503.6 L585.7,503.6 L586.2,503.6 L586.6,503.6 L587.1,483.6 L587.6,483.6 L588.0,483.6 L588.5,477.0 L589.0,477.0 L589.4,477.0 L589.9,477.0 L590.4,470.3 L590.8,470.3 L591.3,470.3 L591.8,470.3 L592.2,470.3 L592.7,477.0 L593.1,477.0 L593.6,490.3 L594.1,496.9 L594.5,503.6 L595.0,510.3 L595.5,510.3 L595.9,510.3 L596.4,510.3 L596.9,496.9 L597.3,510.3 L597.8,510.3 L598.3,510.3 L598.7,510.3 L599.2,510.3 L599.7,510.3 L600.1,510.3 L600.6,516.9 L601.0,510.3 L601.5,510.3 L602.0,510.3 L602.4,503.6 L602.9,503.6 L603.4,496.9 L603.8,503.6 L604.3,503.6 L604.8,490.3 L605.2,496.9 L605.7,496.9 L606.2,496.9 L606.6,496.9 L607.1,496.9 L607.6,496.9 L608.0,496.9 L608.5,496.9 L609.0,496.9 L609.4,523.6 L609.9,523.6 L610.3,523.6 L610.8,523.6 L611.3,523.6 L611.7,523.6 L612.2,543.5 L612.7,536.9 L613.1,536.9 L613.6,536.9 L614.1,536.9 L614.5,536.9 L615.0,523.6 L615.5,523.6 L615.9,503.6 L616.4,503.6 L616.9,490.3 L617.3,490.3 L617.8,483.6 L618.3,483.6 L618.7,477.0 L619.2,483.6 L619.6,483.6 L620.1,483.6 L620.6,483.6 L621.0,483.6 L621.5,483.6 L622.0,483.6 L622.4,483.6 L622.9,483.6 L623.4,483.6 L623.8,483.6 L624.3,483.6 L624.8,483.6 L625.2,483.6 L625.7,483.6 L626.2,483.6 L626.6,490.3 L627.1,490.3 L627.6,490.3 L628.0,503.6 L628.5,510.3 L628.9,510.3 L629.4,523.6 L629.9,523.6 L630.3,516.9 L630.8,503.6 L631.3,503.6 L631.7,503.6 L632.2,503.6 L632.7,503.6 L633.1,503.6 L633.6,503.6 L634.1,483.6 L634.5,490.3 L635.0,496.9 L635.5,496.9 L635.9,496.9 L636.4,496.9 L636.9,516.9 L637.3,503.6 L637.8,503.6 L638.2,503.6 L638.7,496.9 L639.2,496.9 L639.6,490.3 L640.1,503.6 L640.6,496.9 L641.0,490.3 L641.5,503.6" fill="none" stroke="#7b6ed0" stroke-width="1"/>
<path d="M316,690.5 H643" stroke="#6e7079" stroke-width="1"/>
<path d="M337.2,690 V695" stroke="#6e7079" stroke-width="1"/>
<path d="M364.4,690 V695" stroke="#6e7079" stroke-width="1"/>
<path d="M391.6,690 V695" stroke="#6e7079" stroke-width="1"/>
<path d="M418.8,690 V695" stroke="#6e7079" stroke-width="1"/>
<path d="M446.0,690 V695" stroke="#6e7079" stroke-width="1"/>
<path d="M473.2,690 V695" stroke="#6e7079" stroke-width="1"/>
<path d="M500.4,690 V695" stroke="#6e7079" stroke-width="1"/>
<path d="M527.6,690 V695" stroke="#6e7079" stroke-width="1"/>
<path d="M554.8,690 V695" stroke="#6e7079" stroke-width="1"/>
<path d="M582.0,690 V695" stroke="#6e7079" stroke-width="1"/>
<path d="M609.2,690 V695" stroke="#6e7079" stroke-width="1"/>
<path d="M636.4,690 V695" stroke="#6e7079" stroke-width="1"/>
<rect x="320" y="710" width="323" height="36" fill="#e7effc"/>
<rect x="320" y="710" width="323" height="7.5" fill="#e0e6ee"/>
<path d="M321.0,726.0 L321.5,726.0 L321.9,726.0 L322.4,726.0 L322.8,732.7 L323.3,732.7 L323.8,732.7 L324.2,730.0 L324.7,730.0 L325.1,727.3 L325.6,727.3 L326.1,727.3 L326.5,728.7 L327.0,728.7 L327.4,730.0 L327.9,730.0 L328.4,730.0 L328.8,730.0 L329.3,726.0 L329.8,726.0 L330.2,724.7 L330.7,724.7 L331.1,723.3 L331.6,726.0 L332.1,727.3 L332.5,727.3 L333.0,728.7 L333.4,728.7 L333.9,726.0 L334.4,726.0 L334.8,724.7 L335.3,724.7 L335.7,724.7 L336.2,724.7 L336.7,726.0 L337.1,726.0 L337.6,727.3 L338.0,727.3 L338.5,727.3 L339.0,727.3 L339.4,727.3 L339.9,730.0 L340.3,730.0 L340.8,730.0 L341.3,730.0 L341.7,730.0 L342.2,734.0 L342.7,734.0 L343.1,734.0 L343.6,732.7 L344.0,731.3 L344.5,730.0 L345.0,730.0 L345.4,730.0 L345.9,730.0 L346.3,726.0 L346.8,726.0 L347.3,727.3 L347.7,727.3 L348.2,728.7 L348.6,728.7 L349.1,728.7 L349.6,730.0 L350.0,730.0 L350.5,730.0 L350.9,730.0 L351.4,730.0 L351.9,730.0 L352.3,727.3 L352.8,724.7 L353.2,724.7 L353.7,724.7 L354.2,726.0 L354.6,726.0 L355.1,726.0 L355.5,723.3 L356.0,723.3 L356.5,723.3 L356.9,723.3 L357.4,724.7 L357.9,724.7 L358.3,724.7 L358.8,724.7 L359.2,724.7 L359.7,728.7 L360.2,728.7 L360.6,730.0 L361.1,730.0 L361.5,730.0 L362.0,728.7 L362.5,728.7 L362.9,728.7 L363.4,728.7 L363.8,726.0 L364.3,728.7 L364.8,728.7 L365.2,728.7 L365.7,728.7 L366.1,730.0 L366.6,730.0 L367.1,731.3 L367.5,731.3 L368.0,731.3 L368.4,731.3 L368.9,731.3 L369.4,731.3 L369.8,731.3 L370.3,731.3 L370.8,731.3 L371.2,731.3 L371.7,728.7 L372.1,727.3 L372.6,727.3 L373.1,727.3 L373.5,727.3 L374.0,727.3 L374.4,724.7 L374.9,724.7 L375.4,724.7 L375.8,726.0 L376.3,726.0 L376.7,726.0 L377.2,728.7 L377.7,728.7 L378.1,728.7 L378.6,730.0 L379.0,728.7 L379.5,728.7 L380.0,723.3 L380.4,723.3 L380.9,724.7 L381.3,726.0 L381.8,726.0 L382.3,726.0 L382.7,728.7 L383.2,728.7 L383.6,727.3 L384.1,727.3 L384.6,727.3 L385.0,727.3 L385.5,724.7 L386.0,724.7 L386.4,724.7 L386.9,726.0 L387.3,728.7 L387.8,731.3 L388.3,731.3 L388.7,731.3 L389.2,728.7 L389.6,728.7 L390.1,728.7 L390.6,730.0 L391.0,730.0 L391.5,730.0 L391.9,730.0 L392.4,732.7 L392.9,732.7 L393.3,732.7 L393.8,732.7 L394.2,734.0 L394.7,734.0 L395.2,732.7 L395.6,732.7 L396.1,732.7 L396.5,732.7 L397.0,732.7 L397.5,732.7 L397.9,732.7 L398.4,732.7 L398.9,734.0 L399.3,734.0 L399.8,734.0 L400.2,734.0 L400.7,732.7 L401.2,731.3 L401.6,731.3 L402.1,730.0 L402.5,730.0 L403.0,730.0 L403.5,730.0 L403.9,730.0 L404.4,728.7 L404.8,728.7 L405.3,728.7 L405.8,728.7 L406.2,727.3 L406.7,727.3 L407.1,727.3 L407.6,727.3 L408.1,727.3 L408.5,731.3 L409.0,731.3 L409.4,731.3 L409.9,731.3 L410.4,731.3 L410.8,734.0 L411.3,734.0 L411.7,734.0 L412.2,734.0 L412.7,734.0 L413.1,734.0 L413.6,734.0 L414.1,735.3 L414.5,735.3 L415.0,735.3 L415.4,735.3 L415.9,735.3 L416.4,732.7 L416.8,732.7 L417.3,732.7 L417.7,731.3 L418.2,730.0 L418.7,730.0 L419.1,730.0 L419.6,728.7 L420.0,727.3 L420.5,727.3 L421.0,726.0 L421.4,726.0 L421.9,726.0 L422.3,726.0 L422.8,728.7 L423.3,730.0 L423.7,728.7 L424.2,731.3 L424.6,731.3 L425.1,732.7 L425.6,732.7 L426.0,732.7 L426.5,734.0 L427.0,734.0 L427.4,734.0 L427.9,734.0 L428.3,735.3 L428.8,735.3 L429.3,732.7 L429.7,732.7 L430.2,732.7 L430.6,732.7 L431.1,731.3 L431.6,731.3 L432.0,731.3 L432.5,731.3 L432.9,728.7 L433.4,728.7 L433.9,728.7 L434.3,727.3 L434.8,726.0 L435.2,726.0 L435.7,726.0 L436.2,727.3 L436.6,727.3 L437.1,727.3 L437.5,728.7 L438.0,728.7 L438.5,728.7 L438.9,728.7 L439.4,728.7 L439.8,728.7 L440.3,728.7 L440.8,728.7 L441.2,730.0 L441.7,730.0 L442.2,730.0 L442.6,728.7 L443.1,728.7 L443.5,728.7 L444.0,727.3 L444.5,727.3 L444.9,728.7 L445.4,728.7 L445.8,728.7 L446.3,728.7 L446.8,728.7 L447.2,728.7 L447.7,728.7 L448.1,728.7 L448.6,728.7 L449.1,728.7 L449.5,734.0 L450.0,734.0 L450.4,735.3 L450.9,735.3 L451.4,732.7 L451.8,730.0 L452.3,730.0 L452.7,728.7 L453.2,728.7 L453.7,728.7 L454.1,728.7 L454.6,728.7 L455.1,728.7 L455.5,727.3 L456.0,727.3 L456.4,727.3 L456.9,727.3 L457.4,726.0 L457.8,727.3 L458.3,726.0 L458.7,726.0 L459.2,726.0 L459.7,726.0 L460.1,726.0 L460.6,724.7 L461.0,724.7 L461.5,724.7 L462.0,724.7 L462.4,724.7 L462.9,724.7 L463.3,724.7 L463.8,727.3 L464.3,727.3 L464.7,728.7 L465.2,728.7 L465.6,731.3 L466.1,731.3 L466.6,731.3 L467.0,731.3 L467.5,728.7 L467.9,728.7 L468.4,728.7 L468.9,728.7 L469.3,724.7 L469.8,724.7 L470.3,724.7 L470.7,724.7 L471.2,724.7 L471.6,727.3 L472.1,727.3 L472.6,727.3 L473.0,727.3 L473.5,727.3 L473.9,727.3 L474.4,727.3 L474.9,727.3 L475.3,726.0 L475.8,726.0 L476.2,726.0 L476.7,726.0 L477.2,726.0 L477.6,722.0 L478.1,722.0 L478.5,722.0 L479.0,722.0 L479.5,722.0 L479.9,724.7 L480.4,724.7 L480.8,727.3 L481.3,727.3 L481.8,727.3 L482.2,731.3 L482.7,731.3 L483.2,731.3 L483.6,731.3 L484.1,731.3 L484.5,731.3 L485.0,732.7 L485.5,732.7 L485.9,732.7 L486.4,732.7 L486.8,732.7 L487.3,732.7 L487.8,731.3 L488.2,730.0 L488.7,730.0 L489.1,730.0 L489.6,727.3 L490.1,727.3 L490.5,727.3 L491.0,727.3 L491.4,727.3 L491.9,730.0 L492.4,730.0 L492.8,731.3 L493.3,731.3 L493.7,732.7 L494.2,732.7 L494.7,732.7 L495.1,732.7 L495.6,731.3 L496.1,731.3 L496.5,728.7 L497.0,728.7 L497.4,728.7 L497.9,726.0 L498.4,726.0 L498.8,724.7 L499.3,724.7 L499.7,724.7 L500.2,724.7 L500.7,726.0 L501.1,726.0 L501.6,726.0 L502.0,726.0 L502.5,726.0 L503.0,726.0 L503.4,731.3 L503.9,732.7 L504.3,732.7 L504.8,732.7 L505.3,734.0 L505.7,734.0 L506.2,735.3 L506.6,735.3 L507.1,736.7 L507.6,735.3 L508.0,735.3 L508.5,734.0 L508.9,734.0 L509.4,731.3 L509.9,731.3 L510.3,731.3 L510.8,728.7 L511.3,730.0 L511.7,730.0 L512.2,730.0 L512.6,730.0 L513.1,730.0 L513.6,728.7 L514.0,728.7 L514.5,728.7 L514.9,728.7 L515.4,728.7 L515.9,728.7 L516.3,728.7 L516.8,728.7 L517.2,728.7 L517.7,728.7 L518.2,728.7 L518.6,727.3 L519.1,727.3 L519.5,727.3 L520.0,728.7 L520.5,728.7 L520.9,728.7 L521.4,728.7 L521.8,730.0 L522.3,730.0 L522.8,731.3 L523.2,731.3 L523.7,730.0 L524.2,730.0 L524.6,730.0 L525.1,730.0 L525.5,726.0 L526.0,727.3 L526.5,727.3 L526.9,727.3 L527.4,727.3 L527.8,727.3 L528.3,727.3 L528.8,730.0 L529.2,727.3 L529.7,727.3 L530.1,727.3 L530.6,727.3 L531.1,727.3 L531.5,727.3 L532.0,726.0 L532.4,726.0 L532.9,726.0 L533.4,726.0 L533.8,724.7 L534.3,723.3 L534.7,723.3 L535.2,723.3 L535.7,722.0 L536.1,723.3 L536.6,723.3 L537.0,726.0 L537.5,726.0 L538.0,726.0 L538.4,726.0 L538.9,735.3 L539.4,732.7 L539.8,732.7 L540.3,730.0 L540.7,730.0 L541.2,728.7 L541.7,728.7 L542.1,728.7 L542.6,728.7 L543.0,728.7 L543.5,723.3 L544.0,723.3 L544.4,723.3 L544.9,723.3 L545.3,723.3 L545.8,723.3 L546.3,726.0 L546.7,724.7 L547.2,724.7 L547.6,724.7 L548.1,728.7 L548.6,728.7 L549.0,728.7 L549.5,728.7 L549.9,730.0 L550.4,731.3 L550.9,731.3 L551.3,731.3 L551.8,732.7 L552.3,732.7 L552.7,730.0 L553.2,730.0 L553.6,730.0 L554.1,730.0 L554.6,730.0 L555.0,728.7 L555.5,728.7 L555.9,728.7 L556.4,728.7 L556.9,728.7 L557.3,731.3 L557.8,731.3 L558.2,732.7 L558.7,732.7 L559.2,732.7 L559.6,731.3 L560.1,731.3 L560.5,731.3 L561.0,731.3 L561.5,731.3 L561.9,730.0 L562.4,730.0 L562.8,730.0 L563.3,730.0 L563.8,730.0 L564.2,730.0 L564.7,727.3 L565.1,727.3 L565.6,727.3 L566.1,727.3 L566.5,726.0 L567.0,726.0 L567.5,726.0 L567.9,726.0 L568.4,726.0 L568.8,726.0 L569.3,724.7 L569.8,724.7 L570.2,724.7 L570.7,724.7 L571.1,728.7 L571.6,730.0 L572.1,730.0 L572.5,730.0 L573.0,730.0 L573.4,730.0 L573.9,728.7 L574.4,728.7 L574.8,728.7 L575.3,728.7 L575.7,728.7 L576.2,730.0 L576.7,730.0 L577.1,730.0 L577.6,730.0 L578.0,730.0 L578.5,730.0 L579.0,730.0 L579.4,734.0 L579.9,732.7 L580.4,732.7 L580.8,732.7 L581.3,732.7 L581.7,734.0 L582.2,734.0 L582.7,734.0 L583.1,734.0 L583.6,734.0 L584.0,734.0 L584.5,734.0 L585.0,730.0 L585.4,730.0 L585.9,730.0 L586.3,730.0 L586.8,730.0 L587.3,730.0 L587.7,730.0 L588.2,730.0 L588.6,730.0 L589.1,726.0 L589.6,726.0 L590.0,726.0 L590.5,724.7 L590.9,724.7 L591.4,724.7 L591.9,724.7 L592.3,723.3 L592.8,723.3 L593.2,723.3 L593.7,723.3 L594.2,723.3 L594.6,724.7 L595.1,724.7 L595.6,727.3 L596.0,728.7 L596.5,730.0 L596.9,731.3 L597.4,731.3 L597.9,731.3 L598.3,731.3 L598.8,728.7 L599.2,731.3 L599.7,731.3 L600.2,731.3 L600.6,731.3 L601.1,731.3 L601.5,731.3 L602.0,731.3 L602.5,732.7 L602.9,731.3 L603.4,731.3 L603.8,731.3 L604.3,730.0 L604.8,730.0 L605.2,728.7 L605.7,730.0 L606.1,730.0 L606.6,727.3 L607.1,728.7 L607.5,728.7 L608.0,728.7 L608.5,728.7 L608.9,728.7 L609.4,728.7 L609.8,728.7 L610.3,728.7 L610.8,728.7 L611.2,734.0 L611.7,734.0 L612.1,734.0 L612.6,734.0 L613.1,734.0 L613.5,734.0 L614.0,738.0 L614.4,736.7 L614.9,736.7 L615.4,736.7 L615.8,736.7 L616.3,736.7 L616.7,734.0 L617.2,734.0 L617.7,730.0 L618.1,730.0 L618.6,727.3 L619.0,727.3 L619.5,726.0 L620.0,726.0 L620.4,724.7 L620.9,726.0 L621.3,726.0 L621.8,726.0 L622.3,726.0 L622.7,726.0 L623.2,726.0 L623.7,726.0 L624.1,726.0 L624.6,726.0 L625.0,726.0 L625.5,726.0 L626.0,726.0 L626.4,726.0 L626.9,726.0 L627.3,726.0 L627.8,726.0 L628.3,727.3 L628.7,727.3 L629.2,727.3 L629.6,730.0 L630.1,731.3 L630.6,731.3 L631.0,734.0 L631.5,734.0 L631.9,732.7 L632.4,730.0 L632.9,730.0 L633.3,730.0 L633.8,730.0 L634.2,730.0 L634.7,730.0 L635.2,730.0 L635.6,726.0 L636.1,727.3 L636.6,728.7 L637.0,728.7 L637.5,728.7 L637.9,728.7 L638.4,732.7 L638.9,730.0 L639.3,730.0 L639.8,730.0 L640.2,728.7 L640.7,728.7 L641.2,727.3 L641.6,730.0 L642.1,728.7 L642.5,727.3 L643.0,730.0 L643,746 L321,746 Z" fill="#d8e3f9" stroke="none"/>
<path d="M321.0,726.0 L321.5,726.0 L321.9,726.0 L322.4,726.0 L322.8,732.7 L323.3,732.7 L323.8,732.7 L324.2,730.0 L324.7,730.0 L325.1,727.3 L325.6,727.3 L326.1,727.3 L326.5,728.7 L327.0,728.7 L327.4,730.0 L327.9,730.0 L328.4,730.0 L328.8,730.0 L329.3,726.0 L329.8,726.0 L330.2,724.7 L330.7,724.7 L331.1,723.3 L331.6,726.0 L332.1,727.3 L332.5,727.3 L333.0,728.7 L333.4,728.7 L333.9,726.0 L334.4,726.0 L334.8,724.7 L335.3,724.7 L335.7,724.7 L336.2,724.7 L336.7,726.0 L337.1,726.0 L337.6,727.3 L338.0,727.3 L338.5,727.3 L339.0,727.3 L339.4,727.3 L339.9,730.0 L340.3,730.0 L340.8,730.0 L341.3,730.0 L341.7,730.0 L342.2,734.0 L342.7,734.0 L343.1,734.0 L343.6,732.7 L344.0,731.3 L344.5,730.0 L345.0,730.0 L345.4,730.0 L345.9,730.0 L346.3,726.0 L346.8,726.0 L347.3,727.3 L347.7,727.3 L348.2,728.7 L348.6,728.7 L349.1,728.7 L349.6,730.0 L350.0,730.0 L350.5,730.0 L350.9,730.0 L351.4,730.0 L351.9,730.0 L352.3,727.3 L352.8,724.7 L353.2,724.7 L353.7,724.7 L354.2,726.0 L354.6,726.0 L355.1,726.0 L355.5,723.3 L356.0,723.3 L356.5,723.3 L356.9,723.3 L357.4,724.7 L357.9,724.7 L358.3,724.7 L358.8,724.7 L359.2,724.7 L359.7,728.7 L360.2,728.7 L360.6,730.0 L361.1,730.0 L361.5,730.0 L362.0,728.7 L362.5,728.7 L362.9,728.7 L363.4,728.7 L363.8,726.0 L364.3,728.7 L364.8,728.7 L365.2,728.7 L365.7,728.7 L366.1,730.0 L366.6,730.0 L367.1,731.3 L367.5,731.3 L368.0,731.3 L368.4,731.3 L368.9,731.3 L369.4,731.3 L369.8,731.3 L370.3,731.3 L370.8,731.3 L371.2,731.3 L371.7,728.7 L372.1,727.3 L372.6,727.3 L373.1,727.3 L373.5,727.3 L374.0,727.3 L374.4,724.7 L374.9,724.7 L375.4,724.7 L375.8,726.0 L376.3,726.0 L376.7,726.0 L377.2,728.7 L377.7,728.7 L378.1,728.7 L378.6,730.0 L379.0,728.7 L379.5,728.7 L380.0,723.3 L380.4,723.3 L380.9,724.7 L381.3,726.0 L381.8,726.0 L382.3,726.0 L382.7,728.7 L383.2,728.7 L383.6,727.3 L384.1,727.3 L384.6,727.3 L385.0,727.3 L385.5,724.7 L386.0,724.7 L386.4,724.7 L386.9,726.0 L387.3,728.7 L387.8,731.3 L388.3,731.3 L388.7,731.3 L389.2,728.7 L389.6,728.7 L390.1,728.7 L390.6,730.0 L391.0,730.0 L391.5,730.0 L391.9,730.0 L392.4,732.7 L392.9,732.7 L393.3,732.7 L393.8,732.7 L394.2,734.0 L394.7,734.0 L395.2,732.7 L395.6,732.7 L396.1,732.7 L396.5,732.7 L397.0,732.7 L397.5,732.7 L397.9,732.7 L398.4,732.7 L398.9,734.0 L399.3,734.0 L399.8,734.0 L400.2,734.0 L400.7,732.7 L401.2,731.3 L401.6,731.3 L402.1,730.0 L402.5,730.0 L403.0,730.0 L403.5,730.0 L403.9,730.0 L404.4,728.7 L404.8,728.7 L405.3,728.7 L405.8,728.7 L406.2,727.3 L406.7,727.3 L407.1,727.3 L407.6,727.3 L408.1,727.3 L408.5,731.3 L409.0,731.3 L409.4,731.3 L409.9,731.3 L410.4,731.3 L410.8,734.0 L411.3,734.0 L411.7,734.0 L412.2,734.0 L412.7,734.0 L413.1,734.0 L413.6,734.0 L414.1,735.3 L414.5,735.3 L415.0,735.3 L415.4,735.3 L415.9,735.3 L416.4,732.7 L416.8,732.7 L417.3,732.7 L417.7,731.3 L418.2,730.0 L418.7,730.0 L419.1,730.0 L419.6,728.7 L420.0,727.3 L420.5,727.3 L421.0,726.0 L421.4,726.0 L421.9,726.0 L422.3,726.0 L422.8,728.7 L423.3,730.0 L423.7,728.7 L424.2,731.3 L424.6,731.3 L425.1,732.7 L425.6,732.7 L426.0,732.7 L426.5,734.0 L427.0,734.0 L427.4,734.0 L427.9,734.0 L428.3,735.3 L428.8,735.3 L429.3,732.7 L429.7,732.7 L430.2,732.7 L430.6,732.7 L431.1,731.3 L431.6,731.3 L432.0,731.3 L432.5,731.3 L432.9,728.7 L433.4,728.7 L433.9,728.7 L434.3,727.3 L434.8,726.0 L435.2,726.0 L435.7,726.0 L436.2,727.3 L436.6,727.3 L437.1,727.3 L437.5,728.7 L438.0,728.7 L438.5,728.7 L438.9,728.7 L439.4,728.7 L439.8,728.7 L440.3,728.7 L440.8,728.7 L441.2,730.0 L441.7,730.0 L442.2,730.0 L442.6,728.7 L443.1,728.7 L443.5,728.7 L444.0,727.3 L444.5,727.3 L444.9,728.7 L445.4,728.7 L445.8,728.7 L446.3,728.7 L446.8,728.7 L447.2,728.7 L447.7,728.7 L448.1,728.7 L448.6,728.7 L449.1,728.7 L449.5,734.0 L450.0,734.0 L450.4,735.3 L450.9,735.3 L451.4,732.7 L451.8,730.0 L452.3,730.0 L452.7,728.7 L453.2,728.7 L453.7,728.7 L454.1,728.7 L454.6,728.7 L455.1,728.7 L455.5,727.3 L456.0,727.3 L456.4,727.3 L456.9,727.3 L457.4,726.0 L457.8,727.3 L458.3,726.0 L458.7,726.0 L459.2,726.0 L459.7,726.0 L460.1,726.0 L460.6,724.7 L461.0,724.7 L461.5,724.7 L462.0,724.7 L462.4,724.7 L462.9,724.7 L463.3,724.7 L463.8,727.3 L464.3,727.3 L464.7,728.7 L465.2,728.7 L465.6,731.3 L466.1,731.3 L466.6,731.3 L467.0,731.3 L467.5,728.7 L467.9,728.7 L468.4,728.7 L468.9,728.7 L469.3,724.7 L469.8,724.7 L470.3,724.7 L470.7,724.7 L471.2,724.7 L471.6,727.3 L472.1,727.3 L472.6,727.3 L473.0,727.3 L473.5,727.3 L473.9,727.3 L474.4,727.3 L474.9,727.3 L475.3,726.0 L475.8,726.0 L476.2,726.0 L476.7,726.0 L477.2,726.0 L477.6,722.0 L478.1,722.0 L478.5,722.0 L479.0,722.0 L479.5,722.0 L479.9,724.7 L480.4,724.7 L480.8,727.3 L481.3,727.3 L481.8,727.3 L482.2,731.3 L482.7,731.3 L483.2,731.3 L483.6,731.3 L484.1,731.3 L484.5,731.3 L485.0,732.7 L485.5,732.7 L485.9,732.7 L486.4,732.7 L486.8,732.7 L487.3,732.7 L487.8,731.3 L488.2,730.0 L488.7,730.0 L489.1,730.0 L489.6,727.3 L490.1,727.3 L490.5,727.3 L491.0,727.3 L491.4,727.3 L491.9,730.0 L492.4,730.0 L492.8,731.3 L493.3,731.3 L493.7,732.7 L494.2,732.7 L494.7,732.7 L495.1,732.7 L495.6,731.3 L496.1,731.3 L496.5,728.7 L497.0,728.7 L497.4,728.7 L497.9,726.0 L498.4,726.0 L498.8,724.7 L499.3,724.7 L499.7,724.7 L500.2,724.7 L500.7,726.0 L501.1,726.0 L501.6,726.0 L502.0,726.0 L502.5,726.0 L503.0,726.0 L503.4,731.3 L503.9,732.7 L504.3,732.7 L504.8,732.7 L505.3,734.0 L505.7,734.0 L506.2,735.3 L506.6,735.3 L507.1,736.7 L507.6,735.3 L508.0,735.3 L508.5,734.0 L508.9,734.0 L509.4,731.3 L509.9,731.3 L510.3,731.3 L510.8,728.7 L511.3,730.0 L511.7,730.0 L512.2,730.0 L512.6,730.0 L513.1,730.0 L513.6,728.7 L514.0,728.7 L514.5,728.7 L514.9,728.7 L515.4,728.7 L515.9,728.7 L516.3,728.7 L516.8,728.7 L517.2,728.7 L517.7,728.7 L518.2,728.7 L518.6,727.3 L519.1,727.3 L519.5,727.3 L520.0,728.7 L520.5,728.7 L520.9,728.7 L521.4,728.7 L521.8,730.0 L522.3,730.0 L522.8,731.3 L523.2,731.3 L523.7,730.0 L524.2,730.0 L524.6,730.0 L525.1,730.0 L525.5,726.0 L526.0,727.3 L526.5,727.3 L526.9,727.3 L527.4,727.3 L527.8,727.3 L528.3,727.3 L528.8,730.0 L529.2,727.3 L529.7,727.3 L530.1,727.3 L530.6,727.3 L531.1,727.3 L531.5,727.3 L532.0,726.0 L532.4,726.0 L532.9,726.0 L533.4,726.0 L533.8,724.7 L534.3,723.3 L534.7,723.3 L535.2,723.3 L535.7,722.0 L536.1,723.3 L536.6,723.3 L537.0,726.0 L537.5,726.0 L538.0,726.0 L538.4,726.0 L538.9,735.3 L539.4,732.7 L539.8,732.7 L540.3,730.0 L540.7,730.0 L541.2,728.7 L541.7,728.7 L542.1,728.7 L542.6,728.7 L543.0,728.7 L543.5,723.3 L544.0,723.3 L544.4,723.3 L544.9,723.3 L545.3,723.3 L545.8,723.3 L546.3,726.0 L546.7,724.7 L547.2,724.7 L547.6,724.7 L548.1,728.7 L548.6,728.7 L549.0,728.7 L549.5,728.7 L549.9,730.0 L550.4,731.3 L550.9,731.3 L551.3,731.3 L551.8,732.7 L552.3,732.7 L552.7,730.0 L553.2,730.0 L553.6,730.0 L554.1,730.0 L554.6,730.0 L555.0,728.7 L555.5,728.7 L555.9,728.7 L556.4,728.7 L556.9,728.7 L557.3,731.3 L557.8,731.3 L558.2,732.7 L558.7,732.7 L559.2,732.7 L559.6,731.3 L560.1,731.3 L560.5,731.3 L561.0,731.3 L561.5,731.3 L561.9,730.0 L562.4,730.0 L562.8,730.0 L563.3,730.0 L563.8,730.0 L564.2,730.0 L564.7,727.3 L565.1,727.3 L565.6,727.3 L566.1,727.3 L566.5,726.0 L567.0,726.0 L567.5,726.0 L567.9,726.0 L568.4,726.0 L568.8,726.0 L569.3,724.7 L569.8,724.7 L570.2,724.7 L570.7,724.7 L571.1,728.7 L571.6,730.0 L572.1,730.0 L572.5,730.0 L573.0,730.0 L573.4,730.0 L573.9,728.7 L574.4,728.7 L574.8,728.7 L575.3,728.7 L575.7,728.7 L576.2,730.0 L576.7,730.0 L577.1,730.0 L577.6,730.0 L578.0,730.0 L578.5,730.0 L579.0,730.0 L579.4,734.0 L579.9,732.7 L580.4,732.7 L580.8,732.7 L581.3,732.7 L581.7,734.0 L582.2,734.0 L582.7,734.0 L583.1,734.0 L583.6,734.0 L584.0,734.0 L584.5,734.0 L585.0,730.0 L585.4,730.0 L585.9,730.0 L586.3,730.0 L586.8,730.0 L587.3,730.0 L587.7,730.0 L588.2,730.0 L588.6,730.0 L589.1,726.0 L589.6,726.0 L590.0,726.0 L590.5,724.7 L590.9,724.7 L591.4,724.7 L591.9,724.7 L592.3,723.3 L592.8,723.3 L593.2,723.3 L593.7,723.3 L594.2,723.3 L594.6,724.7 L595.1,724.7 L595.6,727.3 L596.0,728.7 L596.5,730.0 L596.9,731.3 L597.4,731.3 L597.9,731.3 L598.3,731.3 L598.8,728.7 L599.2,731.3 L599.7,731.3 L600.2,731.3 L600.6,731.3 L601.1,731.3 L601.5,731.3 L602.0,731.3 L602.5,732.7 L602.9,731.3 L603.4,731.3 L603.8,731.3 L604.3,730.0 L604.8,730.0 L605.2,728.7 L605.7,730.0 L606.1,730.0 L606.6,727.3 L607.1,728.7 L607.5,728.7 L608.0,728.7 L608.5,728.7 L608.9,728.7 L609.4,728.7 L609.8,728.7 L610.3,728.7 L610.8,728.7 L611.2,734.0 L611.7,734.0 L612.1,734.0 L612.6,734.0 L613.1,734.0 L613.5,734.0 L614.0,738.0 L614.4,736.7 L614.9,736.7 L615.4,736.7 L615.8,736.7 L616.3,736.7 L616.7,734.0 L617.2,734.0 L617.7,730.0 L618.1,730.0 L618.6,727.3 L619.0,727.3 L619.5,726.0 L620.0,726.0 L620.4,724.7 L620.9,726.0 L621.3,726.0 L621.8,726.0 L622.3,726.0 L622.7,726.0 L623.2,726.0 L623.7,726.0 L624.1,726.0 L624.6,726.0 L625.0,726.0 L625.5,726.0 L626.0,726.0 L626.4,726.0 L626.9,726.0 L627.3,726.0 L627.8,726.0 L628.3,727.3 L628.7,727.3 L629.2,727.3 L629.6,730.0 L630.1,731.3 L630.6,731.3 L631.0,734.0 L631.5,734.0 L631.9,732.7 L632.4,730.0 L632.9,730.0 L633.3,730.0 L633.8,730.0 L634.2,730.0 L634.7,730.0 L635.2,730.0 L635.6,726.0 L636.1,727.3 L636.6,728.7 L637.0,728.7 L637.5,728.7 L637.9,728.7 L638.4,732.7 L638.9,730.0 L639.3,730.0 L639.8,730.0 L640.2,728.7 L640.7,728.7 L641.2,727.3 L641.6,730.0 L642.1,728.7 L642.5,727.3 L643.0,730.0" fill="none" stroke="#b9c4dc" stroke-width="0.8"/>
<path d="M320,716 V746" stroke="#b0bace" stroke-width="1"/>
<rect x="317" y="722" width="6" height="18" rx="1.5" fill="#fff" stroke="#aab6c9" stroke-width="1"/>
<path d="M643,716 V746" stroke="#b0bace" stroke-width="1"/>
<rect x="640" y="722" width="6" height="18" rx="1.5" fill="#fff" stroke="#aab6c9" stroke-width="1"/>
<path d="M440,408.8 H465" stroke="#5d61c2" stroke-width="1.6"/>
<circle cx="452.5" cy="408.8" r="5.3" fill="#fff" stroke="#5d61c2" stroke-width="1.9"/>
<circle cx="613" cy="408.9" r="8.9" fill="none" stroke="#222" stroke-width="1.35"/>
<path d="M613,402.5 V409.6 H617.8" fill="none" stroke="#222" stroke-width="1.5"/>
<circle cx="637" cy="408.9" r="8.9" fill="none" stroke="#222" stroke-width="1.35"/>
<path d="M640.8,409.6 A3.8,3.8 0 1,1 635.8,405.9" fill="none" stroke="#222" stroke-width="1.4"/>
<path d="M636.2,403.6 L639.8,404.6 L637.2,407.6 Z" fill="#222" stroke="#222" stroke-width="0.6" stroke-linejoin="round"/>
</svg>
<div class="a" style="left:470px;top:399px;font-size:16px;line-height:20px;color:#333">PM2.5</div>
<div class="a yl" style="left:279px;top:450.0px">35</div>
<div class="a yl" style="left:279px;top:483.3px">30</div>
<div class="a yl" style="left:279px;top:516.6px">25</div>
<div class="a yl" style="left:279px;top:549.9px">20</div>
<div class="a yl" style="left:279px;top:583.1px">15</div>
<div class="a yl" style="left:279px;top:616.4px">10</div>
<div class="a yl" style="left:279px;top:649.7px">5</div>
<div class="a yl" style="left:279px;top:683.0px">0</div>
<div class="a xl" style="left:322.7px;top:698px;width:30px;text-align:center;">09:15</div>
<div class="a xl" style="left:349.9px;top:698px;width:30px;text-align:center;">09:20</div>
<div class="a xl" style="left:377.1px;top:698px;width:30px;text-align:center;">09:25</div>
<div class="a xl" style="left:404.3px;top:698px;width:30px;text-align:center;">09:30</div>
<div class="a xl" style="left:431.5px;top:698px;width:30px;text-align:center;">09:35</div>
<div class="a xl" style="left:458.7px;top:698px;width:30px;text-align:center;">09:40</div>
<div class="a xl" style="left:485.9px;top:698px;width:30px;text-align:center;">09:45</div>
<div class="a xl" style="left:513.1px;top:698px;width:30px;text-align:center;">09:50</div>
<div class="a xl" style="left:540.3px;top:698px;width:30px;text-align:center;">09:55</div>
<div class="a xl" style="left:567.5px;top:698px;width:30px;text-align:center;font-weight:bold;color:#464646;">10:00</div>
<div class="a xl" style="left:594.7px;top:698px;width:30px;text-align:center;">10:05</div>
<div class="a xl" style="left:621.9px;top:698px;width:30px;text-align:center;">10:10</div>
<svg style="left:0;top:0" width="1475" height="773" viewBox="0 0 1475 773">
<defs><linearGradient id="g2" x1="0" y1="0" x2="0" y2="1"><stop offset="0" stop-color="#ddd8f6"/><stop offset="1" stop-color="#f6f4fd"/></linearGradient></defs>
<path d="M701,457.0 H1028" stroke="#e3e5ea" stroke-width="1"/>
<path d="M701,503.6 H1028" stroke="#e3e5ea" stroke-width="1"/>
<path d="M701,550.2 H1028" stroke="#e3e5ea" stroke-width="1"/>
<path d="M701,596.8 H1028" stroke="#e3e5ea" stroke-width="1"/>
<path d="M701,643.4 H1028" stroke="#e3e5ea" stroke-width="1"/>
<path d="M701.5,512.9 L702.0,512.9 L702.4,512.9 L702.9,512.9 L703.4,494.3 L703.8,494.3 L704.3,494.3 L704.8,494.3 L705.2,494.3 L705.7,494.3 L706.1,494.3 L706.6,503.6 L707.1,503.6 L707.5,503.6 L708.0,503.6 L708.5,503.6 L708.9,503.6 L709.4,503.6 L709.9,503.6 L710.3,494.3 L710.8,494.3 L711.3,494.3 L711.7,512.9 L712.2,512.9 L712.7,512.9 L713.1,503.6 L713.6,503.6 L714.1,503.6 L714.5,503.6 L715.0,503.6 L715.4,503.6 L715.9,503.6 L716.4,503.6 L716.8,522.2 L717.3,522.2 L717.8,522.2 L718.2,522.2 L718.7,522.2 L719.2,512.9 L719.6,512.9 L720.1,512.9 L720.6,512.9 L721.0,512.9 L721.5,512.9 L722.0,512.9 L722.4,503.6 L722.9,503.6 L723.4,503.6 L723.8,503.6 L724.3,512.9 L724.7,512.9 L725.2,512.9 L725.7,522.2 L726.1,522.2 L726.6,522.2 L727.1,522.2 L727.5,522.2 L728.0,503.6 L728.5,503.6 L728.9,503.6 L729.4,503.6 L729.9,503.6 L730.3,503.6 L730.8,503.6 L731.3,503.6 L731.7,503.6 L732.2,503.6 L732.7,503.6 L733.1,503.6 L733.6,503.6 L734.0,512.9 L734.5,512.9 L735.0,512.9 L735.4,503.6 L735.9,503.6 L736.4,503.6 L736.8,503.6 L737.3,503.6 L737.8,503.6 L738.2,503.6 L738.7,485.0 L739.2,485.0 L739.6,485.0 L740.1,522.2 L740.6,522.2 L741.0,522.2 L741.5,522.2 L742.0,512.9 L742.4,512.9 L742.9,512.9 L743.3,512.9 L743.8,512.9 L744.3,512.9 L744.7,503.6 L745.2,503.6 L745.7,503.6 L746.1,503.6 L746.6,485.0 L747.1,485.0 L747.5,485.0 L748.0,485.0 L748.5,485.0 L748.9,503.6 L749.4,503.6 L749.9,503.6 L750.3,503.6 L750.8,503.6 L751.2,503.6 L751.7,512.9 L752.2,512.9 L752.6,512.9 L753.1,503.6 L753.6,503.6 L754.0,503.6 L754.5,503.6 L755.0,503.6 L755.4,503.6 L755.9,512.9 L756.4,512.9 L756.8,512.9 L757.3,512.9 L757.8,512.9 L758.2,512.9 L758.7,512.9 L759.2,512.9 L759.6,512.9 L760.1,512.9 L760.5,512.9 L761.0,512.9 L761.5,512.9 L761.9,512.9 L762.4,494.3 L762.9,494.3 L763.3,494.3 L763.8,494.3 L764.3,503.6 L764.7,503.6 L765.2,503.6 L765.7,503.6 L766.1,503.6 L766.6,503.6 L767.1,494.3 L767.5,494.3 L768.0,494.3 L768.5,494.3 L768.9,494.3 L769.4,494.3 L769.8,494.3 L770.3,494.3 L770.8,512.9 L771.2,512.9 L771.7,512.9 L772.2,503.6 L772.6,503.6 L773.1,503.6 L773.6,485.0 L774.0,485.0 L774.5,485.0 L775.0,485.0 L775.4,494.3 L775.9,494.3 L776.4,512.9 L776.8,512.9 L777.3,512.9 L777.8,512.9 L778.2,512.9 L778.7,512.9 L779.1,512.9 L779.6,512.9 L780.1,512.9 L780.5,512.9 L781.0,512.9 L781.5,512.9 L781.9,494.3 L782.4,494.3 L782.9,494.3 L783.3,494.3 L783.8,494.3 L784.3,503.6 L784.7,503.6 L785.2,503.6 L785.7,503.6 L786.1,512.9 L786.6,512.9 L787.1,512.9 L787.5,503.6 L788.0,503.6 L788.4,503.6 L788.9,503.6 L789.4,522.2 L789.8,522.2 L790.3,522.2 L790.8,522.2 L791.2,522.2 L791.7,512.9 L792.2,512.9 L792.6,512.9 L793.1,512.9 L793.6,522.2 L794.0,522.2 L794.5,522.2 L795.0,522.2 L795.4,494.3 L795.9,494.3 L796.3,512.9 L796.8,512.9 L797.3,512.9 L797.7,512.9 L798.2,494.3 L798.7,494.3 L799.1,512.9 L799.6,512.9 L800.1,503.6 L800.5,503.6 L801.0,503.6 L801.5,503.6 L801.9,503.6 L802.4,503.6 L802.9,503.6 L803.3,503.6 L803.8,503.6 L804.3,503.6 L804.7,512.9 L805.2,512.9 L805.6,512.9 L806.1,512.9 L806.6,512.9 L807.0,512.9 L807.5,512.9 L808.0,512.9 L808.4,540.9 L808.9,540.9 L809.4,540.9 L809.8,540.9 L810.3,503.6 L810.8,503.6 L811.2,503.6 L811.7,503.6 L812.2,512.9 L812.6,512.9 L813.1,512.9 L813.6,512.9 L814.0,512.9 L814.5,512.9 L814.9,531.6 L815.4,531.6 L815.9,531.6 L816.3,494.3 L816.8,494.3 L817.3,531.6 L817.7,531.6 L818.2,531.6 L818.7,531.6 L819.1,531.6 L819.6,531.6 L820.1,531.6 L820.5,522.2 L821.0,522.2 L821.5,503.6 L821.9,503.6 L822.4,503.6 L822.9,503.6 L823.3,503.6 L823.8,503.6 L824.2,503.6 L824.7,503.6 L825.2,503.6 L825.6,503.6 L826.1,512.9 L826.6,512.9 L827.0,512.9 L827.5,512.9 L828.0,512.9 L828.4,512.9 L828.9,512.9 L829.4,512.9 L829.8,512.9 L830.3,503.6 L830.8,503.6 L831.2,503.6 L831.7,494.3 L832.2,494.3 L832.6,494.3 L833.1,494.3 L833.5,494.3 L834.0,494.3 L834.5,494.3 L834.9,485.0 L835.4,485.0 L835.9,485.0 L836.3,485.0 L836.8,485.0 L837.3,485.0 L837.7,485.0 L838.2,485.0 L838.7,485.0 L839.1,485.0 L839.6,485.0 L840.1,485.0 L840.5,503.6 L841.0,503.6 L841.4,503.6 L841.9,503.6 L842.4,503.6 L842.8,503.6 L843.3,503.6 L843.8,503.6 L844.2,512.9 L844.7,512.9 L845.2,494.3 L845.6,494.3 L846.1,494.3 L846.6,494.3 L847.0,503.6 L847.5,503.6 L848.0,503.6 L848.4,503.6 L848.9,503.6 L849.4,503.6 L849.8,503.6 L850.3,503.6 L850.7,503.6 L851.2,503.6 L851.7,494.3 L852.1,494.3 L852.6,494.3 L853.1,494.3 L853.5,494.3 L854.0,494.3 L854.5,494.3 L854.9,512.9 L855.4,512.9 L855.9,512.9 L856.3,512.9 L856.8,512.9 L857.3,494.3 L857.7,494.3 L858.2,494.3 L858.7,494.3 L859.1,512.9 L859.6,512.9 L860.0,512.9 L860.5,512.9 L861.0,512.9 L861.4,512.9 L861.9,512.9 L862.4,503.6 L862.8,503.6 L863.3,503.6 L863.8,503.6 L864.2,503.6 L864.7,503.6 L865.2,503.6 L865.6,503.6 L866.1,503.6 L866.6,503.6 L867.0,485.0 L867.5,485.0 L868.0,485.0 L868.4,485.0 L868.9,485.0 L869.3,522.2 L869.8,522.2 L870.3,522.2 L870.7,503.6 L871.2,503.6 L871.7,503.6 L872.1,503.6 L872.6,503.6 L873.1,503.6 L873.5,512.9 L874.0,512.9 L874.5,512.9 L874.9,512.9 L875.4,512.9 L875.9,512.9 L876.3,512.9 L876.8,522.2 L877.3,522.2 L877.7,522.2 L878.2,522.2 L878.6,503.6 L879.1,503.6 L879.6,503.6 L880.0,503.6 L880.5,503.6 L881.0,503.6 L881.4,494.3 L881.9,494.3 L882.4,494.3 L882.8,494.3 L883.3,494.3 L883.8,494.3 L884.2,512.9 L884.7,512.9 L885.2,512.9 L885.6,512.9 L886.1,494.3 L886.6,494.3 L887.0,494.3 L887.5,494.3 L887.9,494.3 L888.4,494.3 L888.9,494.3 L889.3,494.3 L889.8,485.0 L890.3,485.0 L890.7,485.0 L891.2,485.0 L891.7,512.9 L892.1,512.9 L892.6,512.9 L893.1,512.9 L893.5,512.9 L894.0,512.9 L894.5,512.9 L894.9,494.3 L895.4,494.3 L895.8,494.3 L896.3,494.3 L896.8,494.3 L897.2,512.9 L897.7,512.9 L898.2,512.9 L898.6,512.9 L899.1,512.9 L899.6,512.9 L900.0,512.9 L900.5,512.9 L901.0,512.9 L901.4,512.9 L901.9,512.9 L902.4,512.9 L902.8,512.9 L903.3,512.9 L903.8,512.9 L904.2,512.9 L904.7,512.9 L905.1,512.9 L905.6,512.9 L906.1,512.9 L906.5,512.9 L907.0,512.9 L907.5,512.9 L907.9,494.3 L908.4,494.3 L908.9,494.3 L909.3,494.3 L909.8,494.3 L910.3,512.9 L910.7,512.9 L911.2,512.9 L911.7,522.2 L912.1,522.2 L912.6,522.2 L913.1,522.2 L913.5,522.2 L914.0,485.0 L914.4,485.0 L914.9,485.0 L915.4,485.0 L915.8,512.9 L916.3,512.9 L916.8,512.9 L917.2,512.9 L917.7,512.9 L918.2,512.9 L918.6,512.9 L919.1,485.0 L919.6,485.0 L920.0,485.0 L920.5,494.3 L921.0,494.3 L921.4,494.3 L921.9,494.3 L922.4,494.3 L922.8,503.6 L923.3,503.6 L923.7,503.6 L924.2,494.3 L924.7,494.3 L925.1,494.3 L925.6,494.3 L926.1,494.3 L926.5,503.6 L927.0,503.6 L927.5,503.6 L927.9,503.6 L928.4,503.6 L928.9,503.6 L929.3,503.6 L929.8,503.6 L930.3,503.6 L930.7,503.6 L931.2,512.9 L931.7,512.9 L932.1,512.9 L932.6,512.9 L933.0,512.9 L933.5,512.9 L934.0,512.9 L934.4,512.9 L934.9,512.9 L935.4,512.9 L935.8,512.9 L936.3,512.9 L936.8,494.3 L937.2,494.3 L937.7,494.3 L938.2,494.3 L938.6,494.3 L939.1,494.3 L939.6,503.6 L940.0,503.6 L940.5,503.6 L940.9,503.6 L941.4,503.6 L941.9,503.6 L942.3,503.6 L942.8,503.6 L943.3,503.6 L943.7,503.6 L944.2,512.9 L944.7,512.9 L945.1,512.9 L945.6,503.6 L946.1,503.6 L946.5,503.6 L947.0,503.6 L947.5,512.9 L947.9,512.9 L948.4,531.6 L948.9,531.6 L949.3,531.6 L949.8,503.6 L950.2,503.6 L950.7,503.6 L951.2,503.6 L951.6,503.6 L952.1,503.6 L952.6,503.6 L953.0,503.6 L953.5,512.9 L954.0,512.9 L954.4,512.9 L954.9,512.9 L955.4,512.9 L955.8,512.9 L956.3,512.9 L956.8,503.6 L957.2,503.6 L957.7,503.6 L958.2,503.6 L958.6,503.6 L959.1,503.6 L959.5,503.6 L960.0,503.6 L960.5,512.9 L960.9,512.9 L961.4,512.9 L961.9,512.9 L962.3,512.9 L962.8,512.9 L963.3,512.9 L963.7,503.6 L964.2,503.6 L964.7,503.6 L965.1,503.6 L965.6,503.6 L966.1,503.6 L966.5,503.6 L967.0,503.6 L967.5,503.6 L967.9,503.6 L968.4,503.6 L968.8,503.6 L969.3,503.6 L969.8,503.6 L970.2,503.6 L970.7,503.6 L971.2,494.3 L971.6,494.3 L972.1,494.3 L972.6,494.3 L973.0,494.3 L973.5,494.3 L974.0,494.3 L974.4,494.3 L974.9,475.6 L975.4,475.6 L975.8,485.0 L976.3,485.0 L976.8,485.0 L977.2,485.0 L977.7,485.0 L978.1,485.0 L978.6,485.0 L979.1,522.2 L979.5,522.2 L980.0,522.2 L980.5,522.2 L980.9,522.2 L981.4,522.2 L981.9,522.2 L982.3,531.6 L982.8,531.6 L983.3,531.6 L983.7,531.6 L984.2,531.6 L984.7,531.6 L985.1,531.6 L985.6,531.6 L986.0,531.6 L986.5,531.6 L987.0,522.2 L987.4,522.2 L987.9,522.2 L988.4,522.2 L988.8,512.9 L989.3,512.9 L989.8,512.9 L990.2,512.9 L990.7,512.9 L991.2,512.9 L991.6,512.9 L992.1,512.9 L992.6,512.9 L993.0,512.9 L993.5,522.2 L994.0,522.2 L994.4,522.2 L994.9,522.2 L995.3,522.2 L995.8,512.9 L996.3,512.9 L996.7,512.9 L997.2,512.9 L997.7,512.9 L998.1,512.9 L998.6,512.9 L999.1,512.9 L999.5,512.9 L1000.0,522.2 L1000.5,522.2 L1000.9,522.2 L1001.4,522.2 L1001.9,522.2 L1002.3,512.9 L1002.8,512.9 L1003.3,512.9 L1003.7,512.9 L1004.2,512.9 L1004.6,485.0 L1005.1,485.0 L1005.6,485.0 L1006.0,485.0 L1006.5,485.0 L1007.0,485.0 L1007.4,485.0 L1007.9,503.6 L1008.4,503.6 L1008.8,503.6 L1009.3,512.9 L1009.8,512.9 L1010.2,512.9 L1010.7,512.9 L1011.2,512.9 L1011.6,512.9 L1012.1,512.9 L1012.6,512.9 L1013.0,512.9 L1013.5,512.9 L1013.9,512.9 L1014.4,512.9 L1014.9,512.9 L1015.3,512.9 L1015.8,512.9 L1016.3,512.9 L1016.7,512.9 L1017.2,512.9 L1017.7,512.9 L1018.1,512.9 L1018.6,512.9 L1019.1,512.9 L1019.5,512.9 L1020.0,512.9 L1020.5,512.9 L1020.9,512.9 L1021.4,512.9 L1021.9,485.0 L1022.3,485.0 L1022.8,485.0 L1023.2,485.0 L1023.7,485.0 L1024.2,503.6 L1024.6,503.6 L1025.1,503.6 L1025.6,503.6 L1026.0,503.6 L1026.5,503.6 L1026.5,690 L701.5,690 Z" fill="url(#g2)" stroke="none"/>
<path d="M701.5,512.9 L702.0,512.9 L702.4,512.9 L702.9,512.9 L703.4,494.3 L703.8,494.3 L704.3,494.3 L704.8,494.3 L705.2,494.3 L705.7,494.3 L706.1,494.3 L706.6,503.6 L707.1,503.6 L707.5,503.6 L708.0,503.6 L708.5,503.6 L708.9,503.6 L709.4,503.6 L709.9,503.6 L710.3,494.3 L710.8,494.3 L711.3,494.3 L711.7,512.9 L712.2,512.9 L712.7,512.9 L713.1,503.6 L713.6,503.6 L714.1,503.6 L714.5,503.6 L715.0,503.6 L715.4,503.6 L715.9,503.6 L716.4,503.6 L716.8,522.2 L717.3,522.2 L717.8,522.2 L718.2,522.2 L718.7,522.2 L719.2,512.9 L719.6,512.9 L720.1,512.9 L720.6,512.9 L721.0,512.9 L721.5,512.9 L722.0,512.9 L722.4,503.6 L722.9,503.6 L723.4,503.6 L723.8,503.6 L724.3,512.9 L724.7,512.9 L725.2,512.9 L725.7,522.2 L726.1,522.2 L726.6,522.2 L727.1,522.2 L727.5,522.2 L728.0,503.6 L728.5,503.6 L728.9,503.6 L729.4,503.6 L729.9,503.6 L730.3,503.6 L730.8,503.6 L731.3,503.6 L731.7,503.6 L732.2,503.6 L732.7,503.6 L733.1,503.6 L733.6,503.6 L734.0,512.9 L734.5,512.9 L735.0,512.9 L735.4,503.6 L735.9,503.6 L736.4,503.6 L736.8,503.6 L737.3,503.6 L737.8,503.6 L738.2,503.6 L738.7,485.0 L739.2,485.0 L739.6,485.0 L740.1,522.2 L740.6,522.2 L741.0,522.2 L741.5,522.2 L742.0,512.9 L742.4,512.9 L742.9,512.9 L743.3,512.9 L743.8,512.9 L744.3,512.9 L744.7,503.6 L745.2,503.6 L745.7,503.6 L746.1,503.6 L746.6,485.0 L747.1,485.0 L747.5,485.0 L748.0,485.0 L748.5,485.0 L748.9,503.6 L749.4,503.6 L749.9,503.6 L750.3,503.6 L750.8,503.6 L751.2,503.6 L751.7,512.9 L752.2,512.9 L752.6,512.9 L753.1,503.6 L753.6,503.6 L754.0,503.6 L754.5,503.6 L755.0,503.6 L755.4,503.6 L755.9,512.9 L756.4,512.9 L756.8,512.9 L757.3,512.9 L757.8,512.9 L758.2,512.9 L758.7,512.9 L759.2,512.9 L759.6,512.9 L760.1,512.9 L760.5,512.9 L761.0,512.9 L761.5,512.9 L761.9,512.9 L762.4,494.3 L762.9,494.3 L763.3,494.3 L763.8,494.3 L764.3,503.6 L764.7,503.6 L765.2,503.6 L765.7,503.6 L766.1,503.6 L766.6,503.6 L767.1,494.3 L767.5,494.3 L768.0,494.3 L768.5,494.3 L768.9,494.3 L769.4,494.3 L769.8,494.3 L770.3,494.3 L770.8,512.9 L771.2,512.9 L771.7,512.9 L772.2,503.6 L772.6,503.6 L773.1,503.6 L773.6,485.0 L774.0,485.0 L774.5,485.0 L775.0,485.0 L775.4,494.3 L775.9,494.3 L776.4,512.9 L776.8,512.9 L777.3,512.9 L777.8,512.9 L778.2,512.9 L778.7,512.9 L779.1,512.9 L779.6,512.9 L780.1,512.9 L780.5,512.9 L781.0,512.9 L781.5,512.9 L781.9,494.3 L782.4,494.3 L782.9,494.3 L783.3,494.3 L783.8,494.3 L784.3,503.6 L784.7,503.6 L785.2,503.6 L785.7,503.6 L786.1,512.9 L786.6,512.9 L787.1,512.9 L787.5,503.6 L788.0,503.6 L788.4,503.6 L788.9,503.6 L789.4,522.2 L789.8,522.2 L790.3,522.2 L790.8,522.2 L791.2,522.2 L791.7,512.9 L792.2,512.9 L792.6,512.9 L793.1,512.9 L793.6,522.2 L794.0,522.2 L794.5,522.2 L795.0,522.2 L795.4,494.3 L795.9,494.3 L796.3,512.9 L796.8,512.9 L797.3,512.9 L797.7,512.9 L798.2,494.3 L798.7,494.3 L799.1,512.9 L799.6,512.9 L800.1,503.6 L800.5,503.6 L801.0,503.6 L801.5,503.6 L801.9,503.6 L802.4,503.6 L802.9,503.6 L803.3,503.6 L803.8,503.6 L804.3,503.6 L804.7,512.9 L805.2,512.9 L805.6,512.9 L806.1,512.9 L806.6,512.9 L807.0,512.9 L807.5,512.9 L808.0,512.9 L808.4,540.9 L808.9,540.9 L809.4,540.9 L809.8,540.9 L810.3,503.6 L810.8,503.6 L811.2,503.6 L811.7,503.6 L812.2,512.9 L812.6,512.9 L813.1,512.9 L813.6,512.9 L814.0,512.9 L814.5,512.9 L814.9,531.6 L815.4,531.6 L815.9,531.6 L816.3,494.3 L816.8,494.3 L817.3,531.6 L817.7,531.6 L818.2,531.6 L818.7,531.6 L819.1,531.6 L819.6,531.6 L820.1,531.6 L820.5,522.2 L821.0,522.2 L821.5,503.6 L821.9,503.6 L822.4,503.6 L822.9,503.6 L823.3,503.6 L823.8,503.6 L824.2,503.6 L824.7,503.6 L825.2,503.6 L825.6,503.6 L826.1,512.9 L826.6,512.9 L827.0,512.9 L827.5,512.9 L828.0,512.9 L828.4,512.9 L828.9,512.9 L829.4,512.9 L829.8,512.9 L830.3,503.6 L830.8,503.6 L831.2,503.6 L831.7,494.3 L832.2,494.3 L832.6,494.3 L833.1,494.3 L833.5,494.3 L834.0,494.3 L834.5,494.3 L834.9,485.0 L835.4,485.0 L835.9,485.0 L836.3,485.0 L836.8,485.0 L837.3,485.0 L837.7,485.0 L838.2,485.0 L838.7,485.0 L839.1,485.0 L839.6,485.0 L840.1,485.0 L840.5,503.6 L841.0,503.6 L841.4,503.6 L841.9,503.6 L842.4,503.6 L842.8,503.6 L843.3,503.6 L843.8,503.6 L844.2,512.9 L844.7,512.9 L845.2,494.3 L845.6,494.3 L846.1,494.3 L846.6,494.3 L847.0,503.6 L847.5,503.6 L848.0,503.6 L848.4,503.6 L848.9,503.6 L849.4,503.6 L849.8,503.6 L850.3,503.6 L850.7,503.6 L851.2,503.6 L851.7,494.3 L852.1,494.3 L852.6,494.3 L853.1,494.3 L853.5,494.3 L854.0,494.3 L854.5,494.3 L854.9,512.9 L855.4,512.9 L855.9,512.9 L856.3,512.9 L856.8,512.9 L857.3,494.3 L857.7,494.3 L858.2,494.3 L858.7,494.3 L859.1,512.9 L859.6,512.9 L860.0,512.9 L860.5,512.9 L861.0,512.9 L861.4,512.9 L861.9,512.9 L862.4,503.6 L862.8,503.6 L863.3,503.6 L863.8,503.6 L864.2,503.6 L864.7,503.6 L865.2,503.6 L865.6,503.6 L866.1,503.6 L866.6,503.6 L867.0,485.0 L867.5,485.0 L868.0,485.0 L868.4,485.0 L868.9,485.0 L869.3,522.2 L869.8,522.2 L870.3,522.2 L870.7,503.6 L871.2,503.6 L871.7,503.6 L872.1,503.6 L872.6,503.6 L873.1,503.6 L873.5,512.9 L874.0,512.9 L874.5,512.9 L874.9,512.9 L875.4,512.9 L875.9,512.9 L876.3,512.9 L876.8,522.2 L877.3,522.2 L877.7,522.2 L878.2,522.2 L878.6,503.6 L879.1,503.6 L879.6,503.6 L880.0,503.6 L880.5,503.6 L881.0,503.6 L881.4,494.3 L881.9,494.3 L882.4,494.3 L882.8,494.3 L883.3,494.3 L883.8,494.3 L884.2,512.9 L884.7,512.9 L885.2,512.9 L885.6,512.9 L886.1,494.3 L886.6,494.3 L887.0,494.3 L887.5,494.3 L887.9,494.3 L888.4,494.3 L888.9,494.3 L889.3,494.3 L889.8,485.0 L890.3,485.0 L890.7,485.0 L891.2,485.0 L891.7,512.9 L892.1,512.9 L892.6,512.9 L893.1,512.9 L893.5,512.9 L894.0,512.9 L894.5,512.9 L894.9,494.3 L895.4,494.3 L895.8,494.3 L896.3,494.3 L896.8,494.3 L897.2,512.9 L897.7,512.9 L898.2,512.9 L898.6,512.9 L899.1,512.9 L899.6,512.9 L900.0,512.9 L900.5,512.9 L901.0,512.9 L901.4,512.9 L901.9,512.9 L902.4,512.9 L902.8,512.9 L903.3,512.9 L903.8,512.9 L904.2,512.9 L904.7,512.9 L905.1,512.9 L905.6,512.9 L906.1,512.9 L906.5,512.9 L907.0,512.9 L907.5,512.9 L907.9,494.3 L908.4,494.3 L908.9,494.3 L909.3,494.3 L909.8,494.3 L910.3,512.9 L910.7,512.9 L911.2,512.9 L911.7,522.2 L912.1,522.2 L912.6,522.2 L913.1,522.2 L913.5,522.2 L914.0,485.0 L914.4,485.0 L914.9,485.0 L915.4,485.0 L915.8,512.9 L916.3,512.9 L916.8,512.9 L917.2,512.9 L917.7,512.9 L918.2,512.9 L918.6,512.9 L919.1,485.0 L919.6,485.0 L920.0,485.0 L920.5,494.3 L921.0,494.3 L921.4,494.3 L921.9,494.3 L922.4,494.3 L922.8,503.6 L923.3,503.6 L923.7,503.6 L924.2,494.3 L924.7,494.3 L925.1,494.3 L925.6,494.3 L926.1,494.3 L926.5,503.6 L927.0,503.6 L927.5,503.6 L927.9,503.6 L928.4,503.6 L928.9,503.6 L929.3,503.6 L929.8,503.6 L930.3,503.6 L930.7,503.6 L931.2,512.9 L931.7,512.9 L932.1,512.9 L932.6,512.9 L933.0,512.9 L933.5,512.9 L934.0,512.9 L934.4,512.9 L934.9,512.9 L935.4,512.9 L935.8,512.9 L936.3,512.9 L936.8,494.3 L937.2,494.3 L937.7,494.3 L938.2,494.3 L938.6,494.3 L939.1,494.3 L939.6,503.6 L940.0,503.6 L940.5,503.6 L940.9,503.6 L941.4,503.6 L941.9,503.6 L942.3,503.6 L942.8,503.6 L943.3,503.6 L943.7,503.6 L944.2,512.9 L944.7,512.9 L945.1,512.9 L945.6,503.6 L946.1,503.6 L946.5,503.6 L947.0,503.6 L947.5,512.9 L947.9,512.9 L948.4,531.6 L948.9,531.6 L949.3,531.6 L949.8,503.6 L950.2,503.6 L950.7,503.6 L951.2,503.6 L951.6,503.6 L952.1,503.6 L952.6,503.6 L953.0,503.6 L953.5,512.9 L954.0,512.9 L954.4,512.9 L954.9,512.9 L955.4,512.9 L955.8,512.9 L956.3,512.9 L956.8,503.6 L957.2,503.6 L957.7,503.6 L958.2,503.6 L958.6,503.6 L959.1,503.6 L959.5,503.6 L960.0,503.6 L960.5,512.9 L960.9,512.9 L961.4,512.9 L961.9,512.9 L962.3,512.9 L962.8,512.9 L963.3,512.9 L963.7,503.6 L964.2,503.6 L964.7,503.6 L965.1,503.6 L965.6,503.6 L966.1,503.6 L966.5,503.6 L967.0,503.6 L967.5,503.6 L967.9,503.6 L968.4,503.6 L968.8,503.6 L969.3,503.6 L969.8,503.6 L970.2,503.6 L970.7,503.6 L971.2,494.3 L971.6,494.3 L972.1,494.3 L972.6,494.3 L973.0,494.3 L973.5,494.3 L974.0,494.3 L974.4,494.3 L974.9,475.6 L975.4,475.6 L975.8,485.0 L976.3,485.0 L976.8,485.0 L977.2,485.0 L977.7,485.0 L978.1,485.0 L978.6,485.0 L979.1,522.2 L979.5,522.2 L980.0,522.2 L980.5,522.2 L980.9,522.2 L981.4,522.2 L981.9,522.2 L982.3,531.6 L982.8,531.6 L983.3,531.6 L983.7,531.6 L984.2,531.6 L984.7,531.6 L985.1,531.6 L985.6,531.6 L986.0,531.6 L986.5,531.6 L987.0,522.2 L987.4,522.2 L987.9,522.2 L988.4,522.2 L988.8,512.9 L989.3,512.9 L989.8,512.9 L990.2,512.9 L990.7,512.9 L991.2,512.9 L991.6,512.9 L992.1,512.9 L992.6,512.9 L993.0,512.9 L993.5,522.2 L994.0,522.2 L994.4,522.2 L994.9,522.2 L995.3,522.2 L995.8,512.9 L996.3,512.9 L996.7,512.9 L997.2,512.9 L997.7,512.9 L998.1,512.9 L998.6,512.9 L999.1,512.9 L999.5,512.9 L1000.0,522.2 L1000.5,522.2 L1000.9,522.2 L1001.4,522.2 L1001.9,522.2 L1002.3,512.9 L1002.8,512.9 L1003.3,512.9 L1003.7,512.9 L1004.2,512.9 L1004.6,485.0 L1005.1,485.0 L1005.6,485.0 L1006.0,485.0 L1006.5,485.0 L1007.0,485.0 L1007.4,485.0 L1007.9,503.6 L1008.4,503.6 L1008.8,503.6 L1009.3,512.9 L1009.8,512.9 L1010.2,512.9 L1010.7,512.9 L1011.2,512.9 L1011.6,512.9 L1012.1,512.9 L1012.6,512.9 L1013.0,512.9 L1013.5,512.9 L1013.9,512.9 L1014.4,512.9 L1014.9,512.9 L1015.3,512.9 L1015.8,512.9 L1016.3,512.9 L1016.7,512.9 L1017.2,512.9 L1017.7,512.9 L1018.1,512.9 L1018.6,512.9 L1019.1,512.9 L1019.5,512.9 L1020.0,512.9 L1020.5,512.9 L1020.9,512.9 L1021.4,512.9 L1021.9,485.0 L1022.3,485.0 L1022.8,485.0 L1023.2,485.0 L1023.7,485.0 L1024.2,503.6 L1024.6,503.6 L1025.1,503.6 L1025.6,503.6 L1026.0,503.6 L1026.5,503.6" fill="none" stroke="#7b6ed0" stroke-width="1"/>
<path d="M701,690.5 H1028" stroke="#6e7079" stroke-width="1"/>
<path d="M722.2,690 V695" stroke="#6e7079" stroke-width="1"/>
<path d="M749.4,690 V695" stroke="#6e7079" stroke-width="1"/>
<path d="M776.6,690 V695" stroke="#6e7079" stroke-width="1"/>
<path d="M803.8,690 V695" stroke="#6e7079" stroke-width="1"/>
<path d="M831.0,690 V695" stroke="#6e7079" stroke-width="1"/>
<path d="M858.2,690 V695" stroke="#6e7079" stroke-width="1"/>
<path d="M885.4,690 V695" stroke="#6e7079" stroke-width="1"/>
<path d="M912.6,690 V695" stroke="#6e7079" stroke-width="1"/>
<path d="M939.8,690 V695" stroke="#6e7079" stroke-width="1"/>
<path d="M967.0,690 V695" stroke="#6e7079" stroke-width="1"/>
<path d="M994.2,690 V695" stroke="#6e7079" stroke-width="1"/>
<path d="M1021.4,690 V695" stroke="#6e7079" stroke-width="1"/>
<rect x="705" y="710" width="323" height="36" fill="#e7effc"/>
<rect x="705" y="710" width="323" height="7.5" fill="#e0e6ee"/>
<path d="M706.0,731.1 L706.5,731.1 L706.9,731.1 L707.4,731.1 L707.8,726.6 L708.3,726.6 L708.8,726.6 L709.2,726.6 L709.7,726.6 L710.1,726.6 L710.6,726.6 L711.1,728.9 L711.5,728.9 L712.0,728.9 L712.4,728.9 L712.9,728.9 L713.4,728.9 L713.8,728.9 L714.3,728.9 L714.8,726.6 L715.2,726.6 L715.7,726.6 L716.1,731.1 L716.6,731.1 L717.1,731.1 L717.5,728.9 L718.0,728.9 L718.4,728.9 L718.9,728.9 L719.4,728.9 L719.8,728.9 L720.3,728.9 L720.7,728.9 L721.2,733.4 L721.7,733.4 L722.1,733.4 L722.6,733.4 L723.0,733.4 L723.5,731.1 L724.0,731.1 L724.4,731.1 L724.9,731.1 L725.3,731.1 L725.8,731.1 L726.3,731.1 L726.7,728.9 L727.2,728.9 L727.7,728.9 L728.1,728.9 L728.6,731.1 L729.0,731.1 L729.5,731.1 L730.0,733.4 L730.4,733.4 L730.9,733.4 L731.3,733.4 L731.8,733.4 L732.3,728.9 L732.7,728.9 L733.2,728.9 L733.6,728.9 L734.1,728.9 L734.6,728.9 L735.0,728.9 L735.5,728.9 L735.9,728.9 L736.4,728.9 L736.9,728.9 L737.3,728.9 L737.8,728.9 L738.2,731.1 L738.7,731.1 L739.2,731.1 L739.6,728.9 L740.1,728.9 L740.5,728.9 L741.0,728.9 L741.5,728.9 L741.9,728.9 L742.4,728.9 L742.9,724.3 L743.3,724.3 L743.8,724.3 L744.2,733.4 L744.7,733.4 L745.2,733.4 L745.6,733.4 L746.1,731.1 L746.5,731.1 L747.0,731.1 L747.5,731.1 L747.9,731.1 L748.4,731.1 L748.8,728.9 L749.3,728.9 L749.8,728.9 L750.2,728.9 L750.7,724.3 L751.1,724.3 L751.6,724.3 L752.1,724.3 L752.5,724.3 L753.0,728.9 L753.4,728.9 L753.9,728.9 L754.4,728.9 L754.8,728.9 L755.3,728.9 L755.8,731.1 L756.2,731.1 L756.7,731.1 L757.1,728.9 L757.6,728.9 L758.1,728.9 L758.5,728.9 L759.0,728.9 L759.4,728.9 L759.9,731.1 L760.4,731.1 L760.8,731.1 L761.3,731.1 L761.7,731.1 L762.2,731.1 L762.7,731.1 L763.1,731.1 L763.6,731.1 L764.0,731.1 L764.5,731.1 L765.0,731.1 L765.4,731.1 L765.9,731.1 L766.3,726.6 L766.8,726.6 L767.3,726.6 L767.7,726.6 L768.2,728.9 L768.6,728.9 L769.1,728.9 L769.6,728.9 L770.0,728.9 L770.5,728.9 L771.0,726.6 L771.4,726.6 L771.9,726.6 L772.3,726.6 L772.8,726.6 L773.3,726.6 L773.7,726.6 L774.2,726.6 L774.6,731.1 L775.1,731.1 L775.6,731.1 L776.0,728.9 L776.5,728.9 L776.9,728.9 L777.4,724.3 L777.9,724.3 L778.3,724.3 L778.8,724.3 L779.2,726.6 L779.7,726.6 L780.2,731.1 L780.6,731.1 L781.1,731.1 L781.5,731.1 L782.0,731.1 L782.5,731.1 L782.9,731.1 L783.4,731.1 L783.9,731.1 L784.3,731.1 L784.8,731.1 L785.2,731.1 L785.7,726.6 L786.2,726.6 L786.6,726.6 L787.1,726.6 L787.5,726.6 L788.0,728.9 L788.5,728.9 L788.9,728.9 L789.4,728.9 L789.8,731.1 L790.3,731.1 L790.8,731.1 L791.2,728.9 L791.7,728.9 L792.1,728.9 L792.6,728.9 L793.1,733.4 L793.5,733.4 L794.0,733.4 L794.4,733.4 L794.9,733.4 L795.4,731.1 L795.8,731.1 L796.3,731.1 L796.7,731.1 L797.2,733.4 L797.7,733.4 L798.1,733.4 L798.6,733.4 L799.1,726.6 L799.5,726.6 L800.0,731.1 L800.4,731.1 L800.9,731.1 L801.4,731.1 L801.8,726.6 L802.3,726.6 L802.7,731.1 L803.2,731.1 L803.7,728.9 L804.1,728.9 L804.6,728.9 L805.0,728.9 L805.5,728.9 L806.0,728.9 L806.4,728.9 L806.9,728.9 L807.3,728.9 L807.8,728.9 L808.3,731.1 L808.7,731.1 L809.2,731.1 L809.6,731.1 L810.1,731.1 L810.6,731.1 L811.0,731.1 L811.5,731.1 L812.0,738.0 L812.4,738.0 L812.9,738.0 L813.3,738.0 L813.8,728.9 L814.3,728.9 L814.7,728.9 L815.2,728.9 L815.6,731.1 L816.1,731.1 L816.6,731.1 L817.0,731.1 L817.5,731.1 L817.9,731.1 L818.4,735.7 L818.9,735.7 L819.3,735.7 L819.8,726.6 L820.2,726.6 L820.7,735.7 L821.2,735.7 L821.6,735.7 L822.1,735.7 L822.5,735.7 L823.0,735.7 L823.5,735.7 L823.9,733.4 L824.4,733.4 L824.8,728.9 L825.3,728.9 L825.8,728.9 L826.2,728.9 L826.7,728.9 L827.2,728.9 L827.6,728.9 L828.1,728.9 L828.5,728.9 L829.0,728.9 L829.5,731.1 L829.9,731.1 L830.4,731.1 L830.8,731.1 L831.3,731.1 L831.8,731.1 L832.2,731.1 L832.7,731.1 L833.1,731.1 L833.6,728.9 L834.1,728.9 L834.5,728.9 L835.0,726.6 L835.4,726.6 L835.9,726.6 L836.4,726.6 L836.8,726.6 L837.3,726.6 L837.7,726.6 L838.2,724.3 L838.7,724.3 L839.1,724.3 L839.6,724.3 L840.1,724.3 L840.5,724.3 L841.0,724.3 L841.4,724.3 L841.9,724.3 L842.4,724.3 L842.8,724.3 L843.3,724.3 L843.7,728.9 L844.2,728.9 L844.7,728.9 L845.1,728.9 L845.6,728.9 L846.0,728.9 L846.5,728.9 L847.0,728.9 L847.4,731.1 L847.9,731.1 L848.3,726.6 L848.8,726.6 L849.3,726.6 L849.7,726.6 L850.2,728.9 L850.6,728.9 L851.1,728.9 L851.6,728.9 L852.0,728.9 L852.5,728.9 L852.9,728.9 L853.4,728.9 L853.9,728.9 L854.3,728.9 L854.8,726.6 L855.3,726.6 L855.7,726.6 L856.2,726.6 L856.6,726.6 L857.1,726.6 L857.6,726.6 L858.0,731.1 L858.5,731.1 L858.9,731.1 L859.4,731.1 L859.9,731.1 L860.3,726.6 L860.8,726.6 L861.2,726.6 L861.7,726.6 L862.2,731.1 L862.6,731.1 L863.1,731.1 L863.5,731.1 L864.0,731.1 L864.5,731.1 L864.9,731.1 L865.4,728.9 L865.8,728.9 L866.3,728.9 L866.8,728.9 L867.2,728.9 L867.7,728.9 L868.2,728.9 L868.6,728.9 L869.1,728.9 L869.5,728.9 L870.0,724.3 L870.5,724.3 L870.9,724.3 L871.4,724.3 L871.8,724.3 L872.3,733.4 L872.8,733.4 L873.2,733.4 L873.7,728.9 L874.1,728.9 L874.6,728.9 L875.1,728.9 L875.5,728.9 L876.0,728.9 L876.4,731.1 L876.9,731.1 L877.4,731.1 L877.8,731.1 L878.3,731.1 L878.7,731.1 L879.2,731.1 L879.7,733.4 L880.1,733.4 L880.6,733.4 L881.1,733.4 L881.5,728.9 L882.0,728.9 L882.4,728.9 L882.9,728.9 L883.4,728.9 L883.8,728.9 L884.3,726.6 L884.7,726.6 L885.2,726.6 L885.7,726.6 L886.1,726.6 L886.6,726.6 L887.0,731.1 L887.5,731.1 L888.0,731.1 L888.4,731.1 L888.9,726.6 L889.3,726.6 L889.8,726.6 L890.3,726.6 L890.7,726.6 L891.2,726.6 L891.6,726.6 L892.1,726.6 L892.6,724.3 L893.0,724.3 L893.5,724.3 L893.9,724.3 L894.4,731.1 L894.9,731.1 L895.3,731.1 L895.8,731.1 L896.3,731.1 L896.7,731.1 L897.2,731.1 L897.6,726.6 L898.1,726.6 L898.6,726.6 L899.0,726.6 L899.5,726.6 L899.9,731.1 L900.4,731.1 L900.9,731.1 L901.3,731.1 L901.8,731.1 L902.2,731.1 L902.7,731.1 L903.2,731.1 L903.6,731.1 L904.1,731.1 L904.5,731.1 L905.0,731.1 L905.5,731.1 L905.9,731.1 L906.4,731.1 L906.8,731.1 L907.3,731.1 L907.8,731.1 L908.2,731.1 L908.7,731.1 L909.2,731.1 L909.6,731.1 L910.1,731.1 L910.5,726.6 L911.0,726.6 L911.5,726.6 L911.9,726.6 L912.4,726.6 L912.8,731.1 L913.3,731.1 L913.8,731.1 L914.2,733.4 L914.7,733.4 L915.1,733.4 L915.6,733.4 L916.1,733.4 L916.5,724.3 L917.0,724.3 L917.4,724.3 L917.9,724.3 L918.4,731.1 L918.8,731.1 L919.3,731.1 L919.7,731.1 L920.2,731.1 L920.7,731.1 L921.1,731.1 L921.6,724.3 L922.0,724.3 L922.5,724.3 L923.0,726.6 L923.4,726.6 L923.9,726.6 L924.4,726.6 L924.8,726.6 L925.3,728.9 L925.7,728.9 L926.2,728.9 L926.7,726.6 L927.1,726.6 L927.6,726.6 L928.0,726.6 L928.5,726.6 L929.0,728.9 L929.4,728.9 L929.9,728.9 L930.3,728.9 L930.8,728.9 L931.3,728.9 L931.7,728.9 L932.2,728.9 L932.6,728.9 L933.1,728.9 L933.6,731.1 L934.0,731.1 L934.5,731.1 L934.9,731.1 L935.4,731.1 L935.9,731.1 L936.3,731.1 L936.8,731.1 L937.3,731.1 L937.7,731.1 L938.2,731.1 L938.6,731.1 L939.1,726.6 L939.6,726.6 L940.0,726.6 L940.5,726.6 L940.9,726.6 L941.4,726.6 L941.9,728.9 L942.3,728.9 L942.8,728.9 L943.2,728.9 L943.7,728.9 L944.2,728.9 L944.6,728.9 L945.1,728.9 L945.5,728.9 L946.0,728.9 L946.5,731.1 L946.9,731.1 L947.4,731.1 L947.8,728.9 L948.3,728.9 L948.8,728.9 L949.2,728.9 L949.7,731.1 L950.1,731.1 L950.6,735.7 L951.1,735.7 L951.5,735.7 L952.0,728.9 L952.5,728.9 L952.9,728.9 L953.4,728.9 L953.8,728.9 L954.3,728.9 L954.8,728.9 L955.2,728.9 L955.7,731.1 L956.1,731.1 L956.6,731.1 L957.1,731.1 L957.5,731.1 L958.0,731.1 L958.4,731.1 L958.9,728.9 L959.4,728.9 L959.8,728.9 L960.3,728.9 L960.7,728.9 L961.2,728.9 L961.7,728.9 L962.1,728.9 L962.6,731.1 L963.0,731.1 L963.5,731.1 L964.0,731.1 L964.4,731.1 L964.9,731.1 L965.4,731.1 L965.8,728.9 L966.3,728.9 L966.7,728.9 L967.2,728.9 L967.7,728.9 L968.1,728.9 L968.6,728.9 L969.0,728.9 L969.5,728.9 L970.0,728.9 L970.4,728.9 L970.9,728.9 L971.3,728.9 L971.8,728.9 L972.3,728.9 L972.7,728.9 L973.2,726.6 L973.6,726.6 L974.1,726.6 L974.6,726.6 L975.0,726.6 L975.5,726.6 L975.9,726.6 L976.4,726.6 L976.9,722.0 L977.3,722.0 L977.8,724.3 L978.2,724.3 L978.7,724.3 L979.2,724.3 L979.6,724.3 L980.1,724.3 L980.6,724.3 L981.0,733.4 L981.5,733.4 L981.9,733.4 L982.4,733.4 L982.9,733.4 L983.3,733.4 L983.8,733.4 L984.2,735.7 L984.7,735.7 L985.2,735.7 L985.6,735.7 L986.1,735.7 L986.5,735.7 L987.0,735.7 L987.5,735.7 L987.9,735.7 L988.4,735.7 L988.8,733.4 L989.3,733.4 L989.8,733.4 L990.2,733.4 L990.7,731.1 L991.1,731.1 L991.6,731.1 L992.1,731.1 L992.5,731.1 L993.0,731.1 L993.5,731.1 L993.9,731.1 L994.4,731.1 L994.8,731.1 L995.3,733.4 L995.8,733.4 L996.2,733.4 L996.7,733.4 L997.1,733.4 L997.6,731.1 L998.1,731.1 L998.5,731.1 L999.0,731.1 L999.4,731.1 L999.9,731.1 L1000.4,731.1 L1000.8,731.1 L1001.3,731.1 L1001.7,733.4 L1002.2,733.4 L1002.7,733.4 L1003.1,733.4 L1003.6,733.4 L1004.0,731.1 L1004.5,731.1 L1005.0,731.1 L1005.4,731.1 L1005.9,731.1 L1006.3,724.3 L1006.8,724.3 L1007.3,724.3 L1007.7,724.3 L1008.2,724.3 L1008.7,724.3 L1009.1,724.3 L1009.6,728.9 L1010.0,728.9 L1010.5,728.9 L1011.0,731.1 L1011.4,731.1 L1011.9,731.1 L1012.3,731.1 L1012.8,731.1 L1013.3,731.1 L1013.7,731.1 L1014.2,731.1 L1014.6,731.1 L1015.1,731.1 L1015.6,731.1 L1016.0,731.1 L1016.5,731.1 L1016.9,731.1 L1017.4,731.1 L1017.9,731.1 L1018.3,731.1 L1018.8,731.1 L1019.2,731.1 L1019.7,731.1 L1020.2,731.1 L1020.6,731.1 L1021.1,731.1 L1021.6,731.1 L1022.0,731.1 L1022.5,731.1 L1022.9,731.1 L1023.4,724.3 L1023.9,724.3 L1024.3,724.3 L1024.8,724.3 L1025.2,724.3 L1025.7,728.9 L1026.2,728.9 L1026.6,728.9 L1027.1,728.9 L1027.5,728.9 L1028.0,728.9 L1028,746 L706,746 Z" fill="#d8e3f9" stroke="none"/>
<path d="M706.0,731.1 L706.5,731.1 L706.9,731.1 L707.4,731.1 L707.8,726.6 L708.3,726.6 L708.8,726.6 L709.2,726.6 L709.7,726.6 L710.1,726.6 L710.6,726.6 L711.1,728.9 L711.5,728.9 L712.0,728.9 L712.4,728.9 L712.9,728.9 L713.4,728.9 L713.8,728.9 L714.3,728.9 L714.8,726.6 L715.2,726.6 L715.7,726.6 L716.1,731.1 L716.6,731.1 L717.1,731.1 L717.5,728.9 L718.0,728.9 L718.4,728.9 L718.9,728.9 L719.4,728.9 L719.8,728.9 L720.3,728.9 L720.7,728.9 L721.2,733.4 L721.7,733.4 L722.1,733.4 L722.6,733.4 L723.0,733.4 L723.5,731.1 L724.0,731.1 L724.4,731.1 L724.9,731.1 L725.3,731.1 L725.8,731.1 L726.3,731.1 L726.7,728.9 L727.2,728.9 L727.7,728.9 L728.1,728.9 L728.6,731.1 L729.0,731.1 L729.5,731.1 L730.0,733.4 L730.4,733.4 L730.9,733.4 L731.3,733.4 L731.8,733.4 L732.3,728.9 L732.7,728.9 L733.2,728.9 L733.6,728.9 L734.1,728.9 L734.6,728.9 L735.0,728.9 L735.5,728.9 L735.9,728.9 L736.4,728.9 L736.9,728.9 L737.3,728.9 L737.8,728.9 L738.2,731.1 L738.7,731.1 L739.2,731.1 L739.6,728.9 L740.1,728.9 L740.5,728.9 L741.0,728.9 L741.5,728.9 L741.9,728.9 L742.4,728.9 L742.9,724.3 L743.3,724.3 L743.8,724.3 L744.2,733.4 L744.7,733.4 L745.2,733.4 L745.6,733.4 L746.1,731.1 L746.5,731.1 L747.0,731.1 L747.5,731.1 L747.9,731.1 L748.4,731.1 L748.8,728.9 L749.3,728.9 L749.8,728.9 L750.2,728.9 L750.7,724.3 L751.1,724.3 L751.6,724.3 L752.1,724.3 L752.5,724.3 L753.0,728.9 L753.4,728.9 L753.9,728.9 L754.4,728.9 L754.8,728.9 L755.3,728.9 L755.8,731.1 L756.2,731.1 L756.7,731.1 L757.1,728.9 L757.6,728.9 L758.1,728.9 L758.5,728.9 L759.0,728.9 L759.4,728.9 L759.9,731.1 L760.4,731.1 L760.8,731.1 L761.3,731.1 L761.7,731.1 L762.2,731.1 L762.7,731.1 L763.1,731.1 L763.6,731.1 L764.0,731.1 L764.5,731.1 L765.0,731.1 L765.4,731.1 L765.9,731.1 L766.3,726.6 L766.8,726.6 L767.3,726.6 L767.7,726.6 L768.2,728.9 L768.6,728.9 L769.1,728.9 L769.6,728.9 L770.0,728.9 L770.5,728.9 L771.0,726.6 L771.4,726.6 L771.9,726.6 L772.3,726.6 L772.8,726.6 L773.3,726.6 L773.7,726.6 L774.2,726.6 L774.6,731.1 L775.1,731.1 L775.6,731.1 L776.0,728.9 L776.5,728.9 L776.9,728.9 L777.4,724.3 L777.9,724.3 L778.3,724.3 L778.8,724.3 L779.2,726.6 L779.7,726.6 L780.2,731.1 L780.6,731.1 L781.1,731.1 L781.5,731.1 L782.0,731.1 L782.5,731.1 L782.9,731.1 L783.4,731.1 L783.9,731.1 L784.3,731.1 L784.8,731.1 L785.2,731.1 L785.7,726.6 L786.2,726.6 L786.6,726.6 L787.1,726.6 L787.5,726.6 L788.0,728.9 L788.5,728.9 L788.9,728.9 L789.4,728.9 L789.8,731.1 L790.3,731.1 L790.8,731.1 L791.2,728.9 L791.7,728.9 L792.1,728.9 L792.6,728.9 L793.1,733.4 L793.5,733.4 L794.0,733.4 L794.4,733.4 L794.9,733.4 L795.4,731.1 L795.8,731.1 L796.3,731.1 L796.7,731.1 L797.2,733.4 L797.7,733.4 L798.1,733.4 L798.6,733.4 L799.1,726.6 L799.5,726.6 L800.0,731.1 L800.4,731.1 L800.9,731.1 L801.4,731.1 L801.8,726.6 L802.3,726.6 L802.7,731.1 L803.2,731.1 L803.7,728.9 L804.1,728.9 L804.6,728.9 L805.0,728.9 L805.5,728.9 L806.0,728.9 L806.4,728.9 L806.9,728.9 L807.3,728.9 L807.8,728.9 L808.3,731.1 L808.7,731.1 L809.2,731.1 L809.6,731.1 L810.1,731.1 L810.6,731.1 L811.0,731.1 L811.5,731.1 L812.0,738.0 L812.4,738.0 L812.9,738.0 L813.3,738.0 L813.8,728.9 L814.3,728.9 L814.7,728.9 L815.2,728.9 L815.6,731.1 L816.1,731.1 L816.6,731.1 L817.0,731.1 L817.5,731.1 L817.9,731.1 L818.4,735.7 L818.9,735.7 L819.3,735.7 L819.8,726.6 L820.2,726.6 L820.7,735.7 L821.2,735.7 L821.6,735.7 L822.1,735.7 L822.5,735.7 L823.0,735.7 L823.5,735.7 L823.9,733.4 L824.4,733.4 L824.8,728.9 L825.3,728.9 L825.8,728.9 L826.2,728.9 L826.7,728.9 L827.2,728.9 L827.6,728.9 L828.1,728.9 L828.5,728.9 L829.0,728.9 L829.5,731.1 L829.9,731.1 L830.4,731.1 L830.8,731.1 L831.3,731.1 L831.8,731.1 L832.2,731.1 L832.7,731.1 L833.1,731.1 L833.6,728.9 L834.1,728.9 L834.5,728.9 L835.0,726.6 L835.4,726.6 L835.9,726.6 L836.4,726.6 L836.8,726.6 L837.3,726.6 L837.7,726.6 L838.2,724.3 L838.7,724.3 L839.1,724.3 L839.6,724.3 L840.1,724.3 L840.5,724.3 L841.0,724.3 L841.4,724.3 L841.9,724.3 L842.4,724.3 L842.8,724.3 L843.3,724.3 L843.7,728.9 L844.2,728.9 L844.7,728.9 L845.1,728.9 L845.6,728.9 L846.0,728.9 L846.5,728.9 L847.0,728.9 L847.4,731.1 L847.9,731.1 L848.3,726.6 L848.8,726.6 L849.3,726.6 L849.7,726.6 L850.2,728.9 L850.6,728.9 L851.1,728.9 L851.6,728.9 L852.0,728.9 L852.5,728.9 L852.9,728.9 L853.4,728.9 L853.9,728.9 L854.3,728.9 L854.8,726.6 L855.3,726.6 L855.7,726.6 L856.2,726.6 L856.6,726.6 L857.1,726.6 L857.6,726.6 L858.0,731.1 L858.5,731.1 L858.9,731.1 L859.4,731.1 L859.9,731.1 L860.3,726.6 L860.8,726.6 L861.2,726.6 L861.7,726.6 L862.2,731.1 L862.6,731.1 L863.1,731.1 L863.5,731.1 L864.0,731.1 L864.5,731.1 L864.9,731.1 L865.4,728.9 L865.8,728.9 L866.3,728.9 L866.8,728.9 L867.2,728.9 L867.7,728.9 L868.2,728.9 L868.6,728.9 L869.1,728.9 L869.5,728.9 L870.0,724.3 L870.5,724.3 L870.9,724.3 L871.4,724.3 L871.8,724.3 L872.3,733.4 L872.8,733.4 L873.2,733.4 L873.7,728.9 L874.1,728.9 L874.6,728.9 L875.1,728.9 L875.5,728.9 L876.0,728.9 L876.4,731.1 L876.9,731.1 L877.4,731.1 L877.8,731.1 L878.3,731.1 L878.7,731.1 L879.2,731.1 L879.7,733.4 L880.1,733.4 L880.6,733.4 L881.1,733.4 L881.5,728.9 L882.0,728.9 L882.4,728.9 L882.9,728.9 L883.4,728.9 L883.8,728.9 L884.3,726.6 L884.7,726.6 L885.2,726.6 L885.7,726.6 L886.1,726.6 L886.6,726.6 L887.0,731.1 L887.5,731.1 L888.0,731.1 L888.4,731.1 L888.9,726.6 L889.3,726.6 L889.8,726.6 L890.3,726.6 L890.7,726.6 L891.2,726.6 L891.6,726.6 L892.1,726.6 L892.6,724.3 L893.0,724.3 L893.5,724.3 L893.9,724.3 L894.4,731.1 L894.9,731.1 L895.3,731.1 L895.8,731.1 L896.3,731.1 L896.7,731.1 L897.2,731.1 L897.6,726.6 L898.1,726.6 L898.6,726.6 L899.0,726.6 L899.5,726.6 L899.9,731.1 L900.4,731.1 L900.9,731.1 L901.3,731.1 L901.8,731.1 L902.2,731.1 L902.7,731.1 L903.2,731.1 L903.6,731.1 L904.1,731.1 L904.5,731.1 L905.0,731.1 L905.5,731.1 L905.9,731.1 L906.4,731.1 L906.8,731.1 L907.3,731.1 L907.8,731.1 L908.2,731.1 L908.7,731.1 L909.2,731.1 L909.6,731.1 L910.1,731.1 L910.5,726.6 L911.0,726.6 L911.5,726.6 L911.9,726.6 L912.4,726.6 L912.8,731.1 L913.3,731.1 L913.8,731.1 L914.2,733.4 L914.7,733.4 L915.1,733.4 L915.6,733.4 L916.1,733.4 L916.5,724.3 L917.0,724.3 L917.4,724.3 L917.9,724.3 L918.4,731.1 L918.8,731.1 L919.3,731.1 L919.7,731.1 L920.2,731.1 L920.7,731.1 L921.1,731.1 L921.6,724.3 L922.0,724.3 L922.5,724.3 L923.0,726.6 L923.4,726.6 L923.9,726.6 L924.4,726.6 L924.8,726.6 L925.3,728.9 L925.7,728.9 L926.2,728.9 L926.7,726.6 L927.1,726.6 L927.6,726.6 L928.0,726.6 L928.5,726.6 L929.0,728.9 L929.4,728.9 L929.9,728.9 L930.3,728.9 L930.8,728.9 L931.3,728.9 L931.7,728.9 L932.2,728.9 L932.6,728.9 L933.1,728.9 L933.6,731.1 L934.0,731.1 L934.5,731.1 L934.9,731.1 L935.4,731.1 L935.9,731.1 L936.3,731.1 L936.8,731.1 L937.3,731.1 L937.7,731.1 L938.2,731.1 L938.6,731.1 L939.1,726.6 L939.6,726.6 L940.0,726.6 L940.5,726.6 L940.9,726.6 L941.4,726.6 L941.9,728.9 L942.3,728.9 L942.8,728.9 L943.2,728.9 L943.7,728.9 L944.2,728.9 L944.6,728.9 L945.1,728.9 L945.5,728.9 L946.0,728.9 L946.5,731.1 L946.9,731.1 L947.4,731.1 L947.8,728.9 L948.3,728.9 L948.8,728.9 L949.2,728.9 L949.7,731.1 L950.1,731.1 L950.6,735.7 L951.1,735.7 L951.5,735.7 L952.0,728.9 L952.5,728.9 L952.9,728.9 L953.4,728.9 L953.8,728.9 L954.3,728.9 L954.8,728.9 L955.2,728.9 L955.7,731.1 L956.1,731.1 L956.6,731.1 L957.1,731.1 L957.5,731.1 L958.0,731.1 L958.4,731.1 L958.9,728.9 L959.4,728.9 L959.8,728.9 L960.3,728.9 L960.7,728.9 L961.2,728.9 L961.7,728.9 L962.1,728.9 L962.6,731.1 L963.0,731.1 L963.5,731.1 L964.0,731.1 L964.4,731.1 L964.9,731.1 L965.4,731.1 L965.8,728.9 L966.3,728.9 L966.7,728.9 L967.2,728.9 L967.7,728.9 L968.1,728.9 L968.6,728.9 L969.0,728.9 L969.5,728.9 L970.0,728.9 L970.4,728.9 L970.9,728.9 L971.3,728.9 L971.8,728.9 L972.3,728.9 L972.7,728.9 L973.2,726.6 L973.6,726.6 L974.1,726.6 L974.6,726.6 L975.0,726.6 L975.5,726.6 L975.9,726.6 L976.4,726.6 L976.9,722.0 L977.3,722.0 L977.8,724.3 L978.2,724.3 L978.7,724.3 L979.2,724.3 L979.6,724.3 L980.1,724.3 L980.6,724.3 L981.0,733.4 L981.5,733.4 L981.9,733.4 L982.4,733.4 L982.9,733.4 L983.3,733.4 L983.8,733.4 L984.2,735.7 L984.7,735.7 L985.2,735.7 L985.6,735.7 L986.1,735.7 L986.5,735.7 L987.0,735.7 L987.5,735.7 L987.9,735.7 L988.4,735.7 L988.8,733.4 L989.3,733.4 L989.8,733.4 L990.2,733.4 L990.7,731.1 L991.1,731.1 L991.6,731.1 L992.1,731.1 L992.5,731.1 L993.0,731.1 L993.5,731.1 L993.9,731.1 L994.4,731.1 L994.8,731.1 L995.3,733.4 L995.8,733.4 L996.2,733.4 L996.7,733.4 L997.1,733.4 L997.6,731.1 L998.1,731.1 L998.5,731.1 L999.0,731.1 L999.4,731.1 L999.9,731.1 L1000.4,731.1 L1000.8,731.1 L1001.3,731.1 L1001.7,733.4 L1002.2,733.4 L1002.7,733.4 L1003.1,733.4 L1003.6,733.4 L1004.0,731.1 L1004.5,731.1 L1005.0,731.1 L1005.4,731.1 L1005.9,731.1 L1006.3,724.3 L1006.8,724.3 L1007.3,724.3 L1007.7,724.3 L1008.2,724.3 L1008.7,724.3 L1009.1,724.3 L1009.6,728.9 L1010.0,728.9 L1010.5,728.9 L1011.0,731.1 L1011.4,731.1 L1011.9,731.1 L1012.3,731.1 L1012.8,731.1 L1013.3,731.1 L1013.7,731.1 L1014.2,731.1 L1014.6,731.1 L1015.1,731.1 L1015.6,731.1 L1016.0,731.1 L1016.5,731.1 L1016.9,731.1 L1017.4,731.1 L1017.9,731.1 L1018.3,731.1 L1018.8,731.1 L1019.2,731.1 L1019.7,731.1 L1020.2,731.1 L1020.6,731.1 L1021.1,731.1 L1021.6,731.1 L1022.0,731.1 L1022.5,731.1 L1022.9,731.1 L1023.4,724.3 L1023.9,724.3 L1024.3,724.3 L1024.8,724.3 L1025.2,724.3 L1025.7,728.9 L1026.2,728.9 L1026.6,728.9 L1027.1,728.9 L1027.5,728.9 L1028.0,728.9" fill="none" stroke="#b9c4dc" stroke-width="0.8"/>
<path d="M705,716 V746" stroke="#b0bace" stroke-width="1"/>
<rect x="702" y="722" width="6" height="18" rx="1.5" fill="#fff" stroke="#aab6c9" stroke-width="1"/>
<path d="M1028,716 V746" stroke="#b0bace" stroke-width="1"/>
<rect x="1025" y="722" width="6" height="18" rx="1.5" fill="#fff" stroke="#aab6c9" stroke-width="1"/>
<path d="M825,408.8 H850" stroke="#5d61c2" stroke-width="1.6"/>
<circle cx="837.5" cy="408.8" r="5.3" fill="#fff" stroke="#5d61c2" stroke-width="1.9"/>
<circle cx="998" cy="408.9" r="8.9" fill="none" stroke="#222" stroke-width="1.35"/>
<path d="M998,402.5 V409.6 H1002.8" fill="none" stroke="#222" stroke-width="1.5"/>
<circle cx="1022" cy="408.9" r="8.9" fill="none" stroke="#222" stroke-width="1.35"/>
<path d="M1025.8,409.6 A3.8,3.8 0 1,1 1020.8,405.9" fill="none" stroke="#222" stroke-width="1.4"/>
<path d="M1021.2,403.6 L1024.8,404.6 L1022.2,407.6 Z" fill="#222" stroke="#222" stroke-width="0.6" stroke-linejoin="round"/>
</svg>
<div class="a" style="left:855px;top:399px;font-size:16px;line-height:20px;color:#333">PM10</div>
<div class="a yl" style="left:664px;top:450.0px">25</div>
<div class="a yl" style="left:664px;top:496.6px">20</div>
<div class="a yl" style="left:664px;top:543.2px">15</div>
<div class="a yl" style="left:664px;top:589.8px">10</div>
<div class="a yl" style="left:664px;top:636.4px">5</div>
<div class="a yl" style="left:664px;top:683.0px">0</div>
<div class="a xl" style="left:707.7px;top:698px;width:30px;text-align:center;">09:15</div>
<div class="a xl" style="left:734.9px;top:698px;width:30px;text-align:center;">09:20</div>
<div class="a xl" style="left:762.1px;top:698px;width:30px;text-align:center;">09:25</div>
<div class="a xl" style="left:789.3px;top:698px;width:30px;text-align:center;">09:30</div>
<div class="a xl" style="left:816.5px;top:698px;width:30px;text-align:center;">09:35</div>
<div class="a xl" style="left:843.7px;top:698px;width:30px;text-align:center;">09:40</div>
<div class="a xl" style="left:870.9px;top:698px;width:30px;text-align:center;">09:45</div>
<div class="a xl" style="left:898.1px;top:698px;width:30px;text-align:center;">09:50</div>
<div class="a xl" style="left:925.3px;top:698px;width:30px;text-align:center;">09:55</div>
<div class="a xl" style="left:952.5px;top:698px;width:30px;text-align:center;font-weight:bold;color:#464646;">10:00</div>
<div class="a xl" style="left:979.7px;top:698px;width:30px;text-align:center;">10:05</div>
<div class="a xl" style="left:1006.9px;top:698px;width:30px;text-align:center;">10:10</div>

<!-- value cards -->
<div class="a" style="left:1075px;top:424px;font-size:16px;line-height:20px;color:#303133">PM10</div>
<svg style="left:1075px;top:485px" width="60" height="60" viewBox="0 0 60 60"><g fill="none" stroke="#1a1a1a" stroke-width="2.1" stroke-linecap="round" stroke-linejoin="round"><rect x="19.3" y="11.4" width="9.9" height="4.2" rx="2.1"/><path d="M19.3,13.4 H14 C12.8,13.4 12,14.2 12,15.4 V42.2 C12,43.4 12.8,44.2 14,44.2 H22.5"/><path d="M29.2,13.4 H33.5 C34.7,13.4 35.5,14.2 35.5,15.4 V27.3"/><path d="M26,34.3 L22.3,38.5 L26,42.6 M38.6,34.3 L42.3,38.5 L38.6,42.6 M35.2,29.3 L30.2,46.8"/></g></svg>
<div class="a" style="left:1191px;top:505px;font-size:29px;line-height:32px;color:#303133">20</div>
<div class="a" style="left:1230px;top:490px;font-size:14px;line-height:18px;color:#303133">ug/m3</div>
<div class="a" style="left:1075px;top:614px;font-size:16px;line-height:20px;color:#303133">PM2.5</div>
<svg style="left:1075px;top:675px" width="60" height="60" viewBox="0 0 60 60"><g fill="none" stroke="#1a1a1a" stroke-width="2.1" stroke-linecap="round" stroke-linejoin="round"><rect x="19.3" y="11.4" width="9.9" height="4.2" rx="2.1"/><path d="M19.3,13.4 H14 C12.8,13.4 12,14.2 12,15.4 V42.2 C12,43.4 12.8,44.2 14,44.2 H22.5"/><path d="M29.2,13.4 H33.5 C34.7,13.4 35.5,14.2 35.5,15.4 V27.3"/><path d="M26,34.3 L22.3,38.5 L26,42.6 M38.6,34.3 L42.3,38.5 L38.6,42.6 M35.2,29.3 L30.2,46.8"/></g></svg>
<div class="a" style="left:1191px;top:695px;font-size:29px;line-height:32px;color:#303133">30</div>
<div class="a" style="left:1230px;top:680px;font-size:14px;line-height:18px;color:#303133">ug/m3</div>

<!-- watermark -->
<div class="a" style="left:1093px;top:721px;font-size:25px;line-height:30px;letter-spacing:-0.3px;color:#f2f2f2;-webkit-text-stroke:0.35px #e6e6e6;text-shadow:1px 1px 0.6px #3c3c3c,1.5px 1.5px 2px rgba(0,0,0,.35)">掘金技术社区 @ 极益科技物联网</div>
</body></html>
